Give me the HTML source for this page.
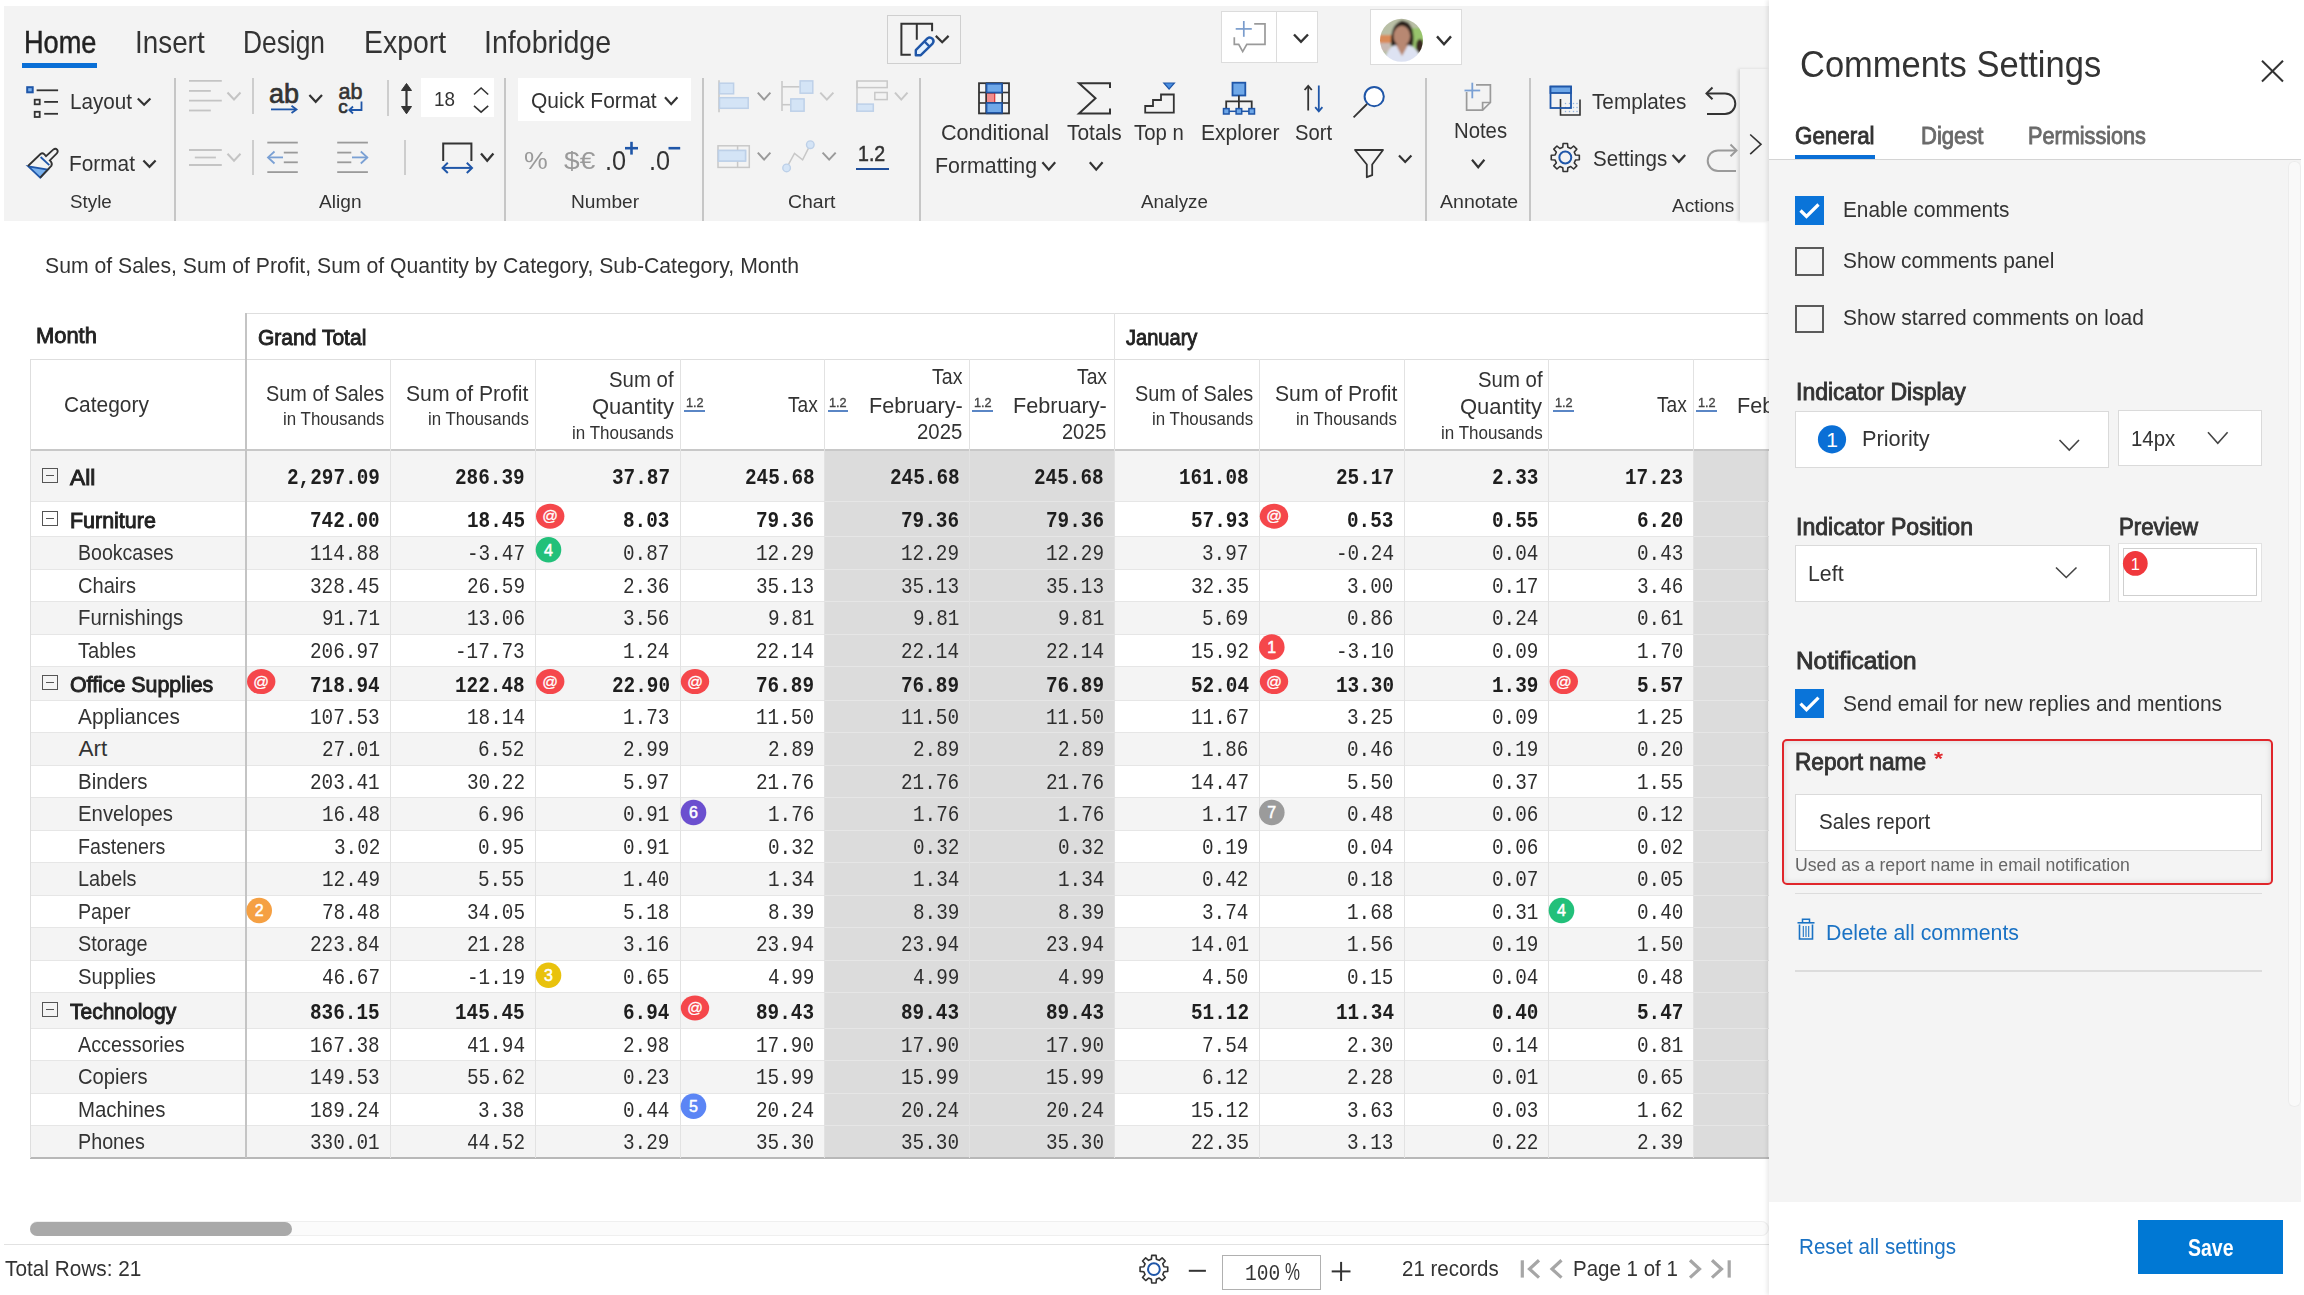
<!DOCTYPE html>
<html><head><meta charset="utf-8"><style>
html,body{margin:0;padding:0;}
body{width:2304px;height:1295px;position:relative;overflow:hidden;background:#fff;font-family:"Liberation Sans",sans-serif;}
.t{position:absolute;white-space:nowrap;transform-origin:0 0;}
.r{position:absolute;}
</style></head><body>
<div class="r" style="left:4.00px;top:5.50px;width:1764.50px;height:215.50px;background:#f3f3f3;"></div>
<div class="t" style="left:23.90px;top:27.12px;font-family:'Liberation Sans', sans-serif;font-size:30.52px;line-height:31px;font-weight:400;color:#222;transform:scaleX(0.8904);-webkit-text-stroke:0.45px #222;">Home</div>
<div class="t" style="left:134.70px;top:27.12px;font-family:'Liberation Sans', sans-serif;font-size:30.52px;line-height:31px;font-weight:400;color:#333;transform:scaleX(0.9121);">Insert</div>
<div class="t" style="left:243.00px;top:27.12px;font-family:'Liberation Sans', sans-serif;font-size:30.52px;line-height:31px;font-weight:400;color:#333;transform:scaleX(0.8631);">Design</div>
<div class="t" style="left:363.60px;top:27.12px;font-family:'Liberation Sans', sans-serif;font-size:30.52px;line-height:31px;font-weight:400;color:#333;transform:scaleX(0.9307);">Export</div>
<div class="t" style="left:484.30px;top:27.12px;font-family:'Liberation Sans', sans-serif;font-size:30.52px;line-height:31px;font-weight:400;color:#333;transform:scaleX(0.9363);">Infobridge</div>
<div class="r" style="left:22.00px;top:63.00px;width:75.00px;height:5.00px;background:#0a6fd6;"></div>
<div class="r" style="left:887.20px;top:15.40px;width:74.10px;height:48.70px;border:1px solid #cfcfcf;box-sizing:border-box;"></div>
<div class="r" style="left:1221.30px;top:10.60px;width:96.70px;height:52.40px;background:#fff;border:1px solid #dcdcdc;box-sizing:border-box;"></div>
<div class="r" style="left:1276.00px;top:10.60px;width:1.00px;height:52.40px;background:#dcdcdc;"></div>
<div class="r" style="left:1369.60px;top:8.50px;width:92.10px;height:56.60px;background:#fff;border:1px solid #dcdcdc;box-sizing:border-box;"></div>
<div class="r" style="left:173.50px;top:78.00px;width:2.00px;height:143.00px;background:#c6c6c6;"></div>
<div class="r" style="left:503.80px;top:78.00px;width:2.00px;height:143.00px;background:#c6c6c6;"></div>
<div class="r" style="left:701.60px;top:78.00px;width:2.00px;height:143.00px;background:#c6c6c6;"></div>
<div class="r" style="left:918.80px;top:78.00px;width:2.00px;height:143.00px;background:#c6c6c6;"></div>
<div class="r" style="left:1425.00px;top:78.00px;width:2.00px;height:143.00px;background:#c6c6c6;"></div>
<div class="r" style="left:1529.20px;top:78.00px;width:2.00px;height:143.00px;background:#c6c6c6;"></div>
<div class="r" style="left:251.80px;top:78.00px;width:2.00px;height:36.00px;background:#cdcdcd;"></div>
<div class="r" style="left:251.80px;top:139.50px;width:2.00px;height:35.90px;background:#cdcdcd;"></div>
<div class="r" style="left:386.80px;top:80.40px;width:2.00px;height:35.90px;background:#cdcdcd;"></div>
<div class="r" style="left:404.00px;top:139.50px;width:2.00px;height:35.90px;background:#cdcdcd;"></div>
<div class="r" style="left:421.20px;top:78.10px;width:72.60px;height:39.40px;background:#fff;"></div>
<div class="r" style="left:518.00px;top:78.10px;width:173.20px;height:42.90px;background:#fff;"></div>
<div class="t" style="left:70.20px;top:89.99px;font-family:'Liberation Sans', sans-serif;font-size:22.82px;line-height:23px;font-weight:400;color:#333;transform:scaleX(0.9049);">Layout</div>
<div class="t" style="left:68.50px;top:151.69px;font-family:'Liberation Sans', sans-serif;font-size:22.53px;line-height:23px;font-weight:400;color:#333;transform:scaleX(0.9249);">Format</div>
<div class="t" style="left:434.00px;top:88.09px;font-family:'Liberation Sans', sans-serif;font-size:21.08px;line-height:21px;font-weight:400;color:#333;transform:scaleX(0.8957);">18</div>
<div class="t" style="left:531.30px;top:89.64px;font-family:'Liberation Sans', sans-serif;font-size:21.80px;line-height:22px;font-weight:400;color:#333;transform:scaleX(0.9609);">Quick Format</div>
<div class="t" style="left:940.70px;top:121.84px;font-family:'Liberation Sans', sans-serif;font-size:22.09px;line-height:22px;font-weight:400;color:#333;transform:scaleX(0.9781);">Conditional</div>
<div class="t" style="left:934.60px;top:155.24px;font-family:'Liberation Sans', sans-serif;font-size:22.09px;line-height:22px;font-weight:400;color:#333;transform:scaleX(0.9668);">Formatting</div>
<div class="t" style="left:1067.00px;top:121.84px;font-family:'Liberation Sans', sans-serif;font-size:22.09px;line-height:22px;font-weight:400;color:#333;transform:scaleX(0.9477);">Totals</div>
<div class="t" style="left:1133.90px;top:121.84px;font-family:'Liberation Sans', sans-serif;font-size:22.09px;line-height:22px;font-weight:400;color:#333;transform:scaleX(0.9210);">Top n</div>
<div class="t" style="left:1200.70px;top:121.74px;font-family:'Liberation Sans', sans-serif;font-size:22.09px;line-height:22px;font-weight:400;color:#333;transform:scaleX(0.9545);">Explorer</div>
<div class="t" style="left:1294.80px;top:121.74px;font-family:'Liberation Sans', sans-serif;font-size:22.09px;line-height:22px;font-weight:400;color:#333;transform:scaleX(0.9151);">Sort</div>
<div class="t" style="left:1453.60px;top:119.94px;font-family:'Liberation Sans', sans-serif;font-size:22.09px;line-height:22px;font-weight:400;color:#333;transform:scaleX(0.9200);">Notes</div>
<div class="t" style="left:1591.90px;top:89.84px;font-family:'Liberation Sans', sans-serif;font-size:22.67px;line-height:23px;font-weight:400;color:#333;transform:scaleX(0.9145);">Templates</div>
<div class="t" style="left:1593.40px;top:146.94px;font-family:'Liberation Sans', sans-serif;font-size:22.67px;line-height:23px;font-weight:400;color:#333;transform:scaleX(0.9071);">Settings</div>
<div class="t" style="left:70.20px;top:191.85px;font-family:'Liberation Sans', sans-serif;font-size:18.90px;line-height:19px;font-weight:400;color:#333;transform:scaleX(0.9954);">Style</div>
<div class="t" style="left:319.30px;top:192.35px;font-family:'Liberation Sans', sans-serif;font-size:18.90px;line-height:19px;font-weight:400;color:#333;transform:scaleX(1.0120);">Align</div>
<div class="t" style="left:570.90px;top:192.05px;font-family:'Liberation Sans', sans-serif;font-size:18.90px;line-height:19px;font-weight:400;color:#333;transform:scaleX(1.0131);">Number</div>
<div class="t" style="left:787.70px;top:191.95px;font-family:'Liberation Sans', sans-serif;font-size:18.90px;line-height:19px;font-weight:400;color:#333;transform:scaleX(1.0282);">Chart</div>
<div class="t" style="left:1140.60px;top:191.95px;font-family:'Liberation Sans', sans-serif;font-size:18.90px;line-height:19px;font-weight:400;color:#333;transform:scaleX(0.9952);">Analyze</div>
<div class="t" style="left:1439.50px;top:191.65px;font-family:'Liberation Sans', sans-serif;font-size:18.90px;line-height:19px;font-weight:400;color:#333;transform:scaleX(1.0340);">Annotate</div>
<div class="t" style="left:1671.60px;top:195.55px;font-family:'Liberation Sans', sans-serif;font-size:18.90px;line-height:19px;font-weight:400;color:#333;transform:scaleX(1.0068);">Actions</div>
<div class="t" style="left:858.10px;top:143.44px;font-family:'Liberation Sans', sans-serif;font-size:21.80px;line-height:22px;font-weight:400;color:#333;transform:scaleX(0.8975);-webkit-text-stroke:0.5px #333;">1.2</div>
<div class="r" style="left:855.80px;top:167.50px;width:32.80px;height:2.30px;background:#1f4e9a;"></div>
<div class="t" style="left:523.70px;top:148.69px;font-family:'Liberation Sans', sans-serif;font-size:23.98px;line-height:24px;font-weight:400;color:#9a9a9a;transform:scaleX(1.1150);">%</div>
<div class="t" style="left:563.50px;top:148.69px;font-family:'Liberation Sans', sans-serif;font-size:23.98px;line-height:24px;font-weight:400;color:#9a9a9a;transform:scaleX(1.1731);">$€</div>
<div class="t" style="left:605.40px;top:146.93px;font-family:'Liberation Sans', sans-serif;font-size:27.62px;line-height:28px;font-weight:400;color:#333;transform:scaleX(0.9150);">.0</div>
<div class="t" style="left:648.90px;top:146.93px;font-family:'Liberation Sans', sans-serif;font-size:27.62px;line-height:28px;font-weight:400;color:#333;transform:scaleX(0.9150);">.0</div>
<div class="r" style="left:1739.50px;top:69.40px;width:29.00px;height:151.60px;background:#f3f3f3;box-shadow:-2px 0 3px rgba(0,0,0,0.12);"></div>
<div class="t" style="left:44.60px;top:255.34px;font-family:'Liberation Sans', sans-serif;font-size:22.09px;line-height:22px;font-weight:400;color:#333;transform:scaleX(0.9596);">Sum of Sales, Sum of Profit, Sum of Quantity by Category, Sub-Category, Month</div>
<div class="r" style="left:30.00px;top:450.50px;width:1738.50px;height:51.00px;background:#f4f4f4;"></div>
<div class="r" style="left:30.00px;top:501.50px;width:1738.50px;height:35.00px;background:#ffffff;"></div>
<div class="r" style="left:30.00px;top:536.50px;width:1738.50px;height:32.50px;background:#f4f4f4;"></div>
<div class="r" style="left:30.00px;top:569.00px;width:1738.50px;height:32.50px;background:#ffffff;"></div>
<div class="r" style="left:30.00px;top:601.50px;width:1738.50px;height:32.50px;background:#f4f4f4;"></div>
<div class="r" style="left:30.00px;top:634.00px;width:1738.50px;height:32.50px;background:#ffffff;"></div>
<div class="r" style="left:30.00px;top:666.50px;width:1738.50px;height:33.50px;background:#f4f4f4;"></div>
<div class="r" style="left:30.00px;top:700.00px;width:1738.50px;height:32.50px;background:#ffffff;"></div>
<div class="r" style="left:30.00px;top:732.50px;width:1738.50px;height:32.50px;background:#f4f4f4;"></div>
<div class="r" style="left:30.00px;top:765.00px;width:1738.50px;height:32.50px;background:#ffffff;"></div>
<div class="r" style="left:30.00px;top:797.50px;width:1738.50px;height:32.50px;background:#f4f4f4;"></div>
<div class="r" style="left:30.00px;top:830.00px;width:1738.50px;height:32.50px;background:#ffffff;"></div>
<div class="r" style="left:30.00px;top:862.50px;width:1738.50px;height:32.50px;background:#f4f4f4;"></div>
<div class="r" style="left:30.00px;top:895.00px;width:1738.50px;height:32.50px;background:#ffffff;"></div>
<div class="r" style="left:30.00px;top:927.50px;width:1738.50px;height:32.50px;background:#f4f4f4;"></div>
<div class="r" style="left:30.00px;top:960.00px;width:1738.50px;height:32.50px;background:#ffffff;"></div>
<div class="r" style="left:30.00px;top:992.50px;width:1738.50px;height:35.50px;background:#f4f4f4;"></div>
<div class="r" style="left:30.00px;top:1028.00px;width:1738.50px;height:32.50px;background:#ffffff;"></div>
<div class="r" style="left:30.00px;top:1060.50px;width:1738.50px;height:32.50px;background:#f4f4f4;"></div>
<div class="r" style="left:30.00px;top:1093.00px;width:1738.50px;height:32.50px;background:#ffffff;"></div>
<div class="r" style="left:30.00px;top:1125.50px;width:1738.50px;height:32.50px;background:#f4f4f4;"></div>
<div class="r" style="left:824.80px;top:450.50px;width:289.60px;height:707.50px;background:#dcdcdc;"></div>
<div class="r" style="left:1693.60px;top:450.50px;width:74.90px;height:707.50px;background:#dcdcdc;"></div>
<div class="r" style="left:30.00px;top:501.00px;width:1738.50px;height:1.00px;background:#e6e6e6;"></div>
<div class="r" style="left:30.00px;top:536.00px;width:1738.50px;height:1.00px;background:#e6e6e6;"></div>
<div class="r" style="left:30.00px;top:568.50px;width:1738.50px;height:1.00px;background:#e6e6e6;"></div>
<div class="r" style="left:30.00px;top:601.00px;width:1738.50px;height:1.00px;background:#e6e6e6;"></div>
<div class="r" style="left:30.00px;top:633.50px;width:1738.50px;height:1.00px;background:#e6e6e6;"></div>
<div class="r" style="left:30.00px;top:666.00px;width:1738.50px;height:1.00px;background:#e6e6e6;"></div>
<div class="r" style="left:30.00px;top:699.50px;width:1738.50px;height:1.00px;background:#e6e6e6;"></div>
<div class="r" style="left:30.00px;top:732.00px;width:1738.50px;height:1.00px;background:#e6e6e6;"></div>
<div class="r" style="left:30.00px;top:764.50px;width:1738.50px;height:1.00px;background:#e6e6e6;"></div>
<div class="r" style="left:30.00px;top:797.00px;width:1738.50px;height:1.00px;background:#e6e6e6;"></div>
<div class="r" style="left:30.00px;top:829.50px;width:1738.50px;height:1.00px;background:#e6e6e6;"></div>
<div class="r" style="left:30.00px;top:862.00px;width:1738.50px;height:1.00px;background:#e6e6e6;"></div>
<div class="r" style="left:30.00px;top:894.50px;width:1738.50px;height:1.00px;background:#e6e6e6;"></div>
<div class="r" style="left:30.00px;top:927.00px;width:1738.50px;height:1.00px;background:#e6e6e6;"></div>
<div class="r" style="left:30.00px;top:959.50px;width:1738.50px;height:1.00px;background:#e6e6e6;"></div>
<div class="r" style="left:30.00px;top:992.00px;width:1738.50px;height:1.00px;background:#e6e6e6;"></div>
<div class="r" style="left:30.00px;top:1027.50px;width:1738.50px;height:1.00px;background:#e6e6e6;"></div>
<div class="r" style="left:30.00px;top:1060.00px;width:1738.50px;height:1.00px;background:#e6e6e6;"></div>
<div class="r" style="left:30.00px;top:1092.50px;width:1738.50px;height:1.00px;background:#e6e6e6;"></div>
<div class="r" style="left:30.00px;top:1125.00px;width:1738.50px;height:1.00px;background:#e6e6e6;"></div>
<div class="r" style="left:245.60px;top:313.00px;width:1522.90px;height:1.20px;background:#dedede;"></div>
<div class="r" style="left:30.00px;top:359.10px;width:1738.50px;height:1.20px;background:#dedede;"></div>
<div class="r" style="left:30.00px;top:448.60px;width:1738.50px;height:2.00px;background:#c8c8c8;"></div>
<div class="r" style="left:30.00px;top:1156.80px;width:1738.50px;height:1.80px;background:#b8b8b8;"></div>
<div class="r" style="left:29.50px;top:359.10px;width:1.20px;height:798.90px;background:#dedede;"></div>
<div class="r" style="left:389.90px;top:359.10px;width:1.00px;height:798.90px;background:#e2e2e2;"></div>
<div class="r" style="left:534.70px;top:359.10px;width:1.00px;height:798.90px;background:#e2e2e2;"></div>
<div class="r" style="left:679.50px;top:359.10px;width:1.00px;height:798.90px;background:#e2e2e2;"></div>
<div class="r" style="left:824.30px;top:359.10px;width:1.00px;height:798.90px;background:#e2e2e2;"></div>
<div class="r" style="left:969.10px;top:359.10px;width:1.00px;height:798.90px;background:#e2e2e2;"></div>
<div class="r" style="left:1113.90px;top:313.00px;width:1.00px;height:845.00px;background:#e2e2e2;"></div>
<div class="r" style="left:1258.70px;top:359.10px;width:1.00px;height:798.90px;background:#e2e2e2;"></div>
<div class="r" style="left:1403.50px;top:359.10px;width:1.00px;height:798.90px;background:#e2e2e2;"></div>
<div class="r" style="left:1548.30px;top:359.10px;width:1.00px;height:798.90px;background:#e2e2e2;"></div>
<div class="r" style="left:1693.10px;top:359.10px;width:1.00px;height:798.90px;background:#e2e2e2;"></div>
<div class="r" style="left:244.60px;top:313.00px;width:2.00px;height:845.00px;background:#c4c4c4;"></div>
<div class="t" style="left:35.90px;top:324.19px;font-family:'Liberation Sans', sans-serif;font-size:22.53px;line-height:23px;font-weight:400;color:#222;transform:scaleX(0.9724);-webkit-text-stroke:0.9px #222;">Month</div>
<div class="t" style="left:257.90px;top:326.29px;font-family:'Liberation Sans', sans-serif;font-size:22.53px;line-height:23px;font-weight:400;color:#222;transform:scaleX(0.9338);-webkit-text-stroke:0.9px #222;">Grand Total</div>
<div class="t" style="left:1126.00px;top:325.59px;font-family:'Liberation Sans', sans-serif;font-size:22.53px;line-height:23px;font-weight:400;color:#222;transform:scaleX(0.8909);-webkit-text-stroke:0.9px #222;">January</div>
<div class="t" style="left:63.70px;top:393.64px;font-family:'Liberation Sans', sans-serif;font-size:22.09px;line-height:22px;font-weight:400;color:#333;transform:scaleX(0.9482);">Category</div>
<div class="t" style="left:266.00px;top:383.44px;font-family:'Liberation Sans', sans-serif;font-size:21.80px;line-height:22px;font-weight:400;color:#333;transform:scaleX(0.9123);">Sum of Sales</div>
<div class="t" style="left:283.00px;top:410.35px;font-family:'Liberation Sans', sans-serif;font-size:18.31px;line-height:18px;font-weight:400;color:#333;transform:scaleX(0.9242);">in Thousands</div>
<div class="t" style="left:406.00px;top:383.44px;font-family:'Liberation Sans', sans-serif;font-size:21.80px;line-height:22px;font-weight:400;color:#333;transform:scaleX(0.9713);">Sum of Profit</div>
<div class="t" style="left:427.50px;top:410.35px;font-family:'Liberation Sans', sans-serif;font-size:18.31px;line-height:18px;font-weight:400;color:#333;transform:scaleX(0.9205);">in Thousands</div>
<div class="t" style="left:608.90px;top:369.14px;font-family:'Liberation Sans', sans-serif;font-size:21.80px;line-height:22px;font-weight:400;color:#333;transform:scaleX(0.9347);">Sum of</div>
<div class="t" style="left:591.50px;top:395.64px;font-family:'Liberation Sans', sans-serif;font-size:21.80px;line-height:22px;font-weight:400;color:#333;transform:scaleX(1.0097);">Quantity</div>
<div class="t" style="left:571.70px;top:424.45px;font-family:'Liberation Sans', sans-serif;font-size:18.31px;line-height:18px;font-weight:400;color:#333;transform:scaleX(0.9288);">in Thousands</div>
<div class="t" style="left:787.70px;top:394.44px;font-family:'Liberation Sans', sans-serif;font-size:21.80px;line-height:22px;font-weight:400;color:#333;transform:scaleX(0.8790);">Tax</div>
<div class="t" style="left:685.80px;top:396.27px;font-family:'Liberation Sans', sans-serif;font-size:12.79px;line-height:13px;font-weight:400;color:#444;transform:scaleX(0.9899);-webkit-text-stroke:0.35px #444;">1.2</div>
<div class="r" style="left:684.20px;top:410.40px;width:20.60px;height:1.40px;background:#5a86c5;"></div>
<div class="t" style="left:829.20px;top:396.27px;font-family:'Liberation Sans', sans-serif;font-size:12.79px;line-height:13px;font-weight:400;color:#444;transform:scaleX(0.9899);-webkit-text-stroke:0.35px #444;">1.2</div>
<div class="r" style="left:827.60px;top:410.40px;width:20.60px;height:1.40px;background:#5a86c5;"></div>
<div class="t" style="left:974.00px;top:396.27px;font-family:'Liberation Sans', sans-serif;font-size:12.79px;line-height:13px;font-weight:400;color:#444;transform:scaleX(0.9899);-webkit-text-stroke:0.35px #444;">1.2</div>
<div class="r" style="left:972.40px;top:410.40px;width:20.60px;height:1.40px;background:#5a86c5;"></div>
<div class="t" style="left:931.90px;top:366.14px;font-family:'Liberation Sans', sans-serif;font-size:21.80px;line-height:22px;font-weight:400;color:#333;transform:scaleX(0.8967);">Tax</div>
<div class="t" style="left:868.60px;top:394.94px;font-family:'Liberation Sans', sans-serif;font-size:21.80px;line-height:22px;font-weight:400;color:#333;transform:scaleX(0.9914);">February-</div>
<div class="t" style="left:917.00px;top:421.44px;font-family:'Liberation Sans', sans-serif;font-size:21.80px;line-height:22px;font-weight:400;color:#333;transform:scaleX(0.9338);">2025</div>
<div class="t" style="left:1077.00px;top:366.14px;font-family:'Liberation Sans', sans-serif;font-size:21.80px;line-height:22px;font-weight:400;color:#333;transform:scaleX(0.8849);">Tax</div>
<div class="t" style="left:1012.70px;top:394.94px;font-family:'Liberation Sans', sans-serif;font-size:21.80px;line-height:22px;font-weight:400;color:#333;transform:scaleX(0.9925);">February-</div>
<div class="t" style="left:1062.00px;top:421.44px;font-family:'Liberation Sans', sans-serif;font-size:21.80px;line-height:22px;font-weight:400;color:#333;transform:scaleX(0.9173);">2025</div>
<div class="t" style="left:1134.80px;top:383.44px;font-family:'Liberation Sans', sans-serif;font-size:21.80px;line-height:22px;font-weight:400;color:#333;transform:scaleX(0.9123);">Sum of Sales</div>
<div class="t" style="left:1151.80px;top:410.35px;font-family:'Liberation Sans', sans-serif;font-size:18.31px;line-height:18px;font-weight:400;color:#333;transform:scaleX(0.9242);">in Thousands</div>
<div class="t" style="left:1274.80px;top:383.44px;font-family:'Liberation Sans', sans-serif;font-size:21.80px;line-height:22px;font-weight:400;color:#333;transform:scaleX(0.9713);">Sum of Profit</div>
<div class="t" style="left:1296.30px;top:410.35px;font-family:'Liberation Sans', sans-serif;font-size:18.31px;line-height:18px;font-weight:400;color:#333;transform:scaleX(0.9205);">in Thousands</div>
<div class="t" style="left:1477.70px;top:369.14px;font-family:'Liberation Sans', sans-serif;font-size:21.80px;line-height:22px;font-weight:400;color:#333;transform:scaleX(0.9347);">Sum of</div>
<div class="t" style="left:1460.30px;top:395.64px;font-family:'Liberation Sans', sans-serif;font-size:21.80px;line-height:22px;font-weight:400;color:#333;transform:scaleX(1.0097);">Quantity</div>
<div class="t" style="left:1440.50px;top:424.45px;font-family:'Liberation Sans', sans-serif;font-size:18.31px;line-height:18px;font-weight:400;color:#333;transform:scaleX(0.9288);">in Thousands</div>
<div class="t" style="left:1656.50px;top:394.44px;font-family:'Liberation Sans', sans-serif;font-size:21.80px;line-height:22px;font-weight:400;color:#333;transform:scaleX(0.8790);">Tax</div>
<div class="t" style="left:1554.60px;top:396.27px;font-family:'Liberation Sans', sans-serif;font-size:12.79px;line-height:13px;font-weight:400;color:#444;transform:scaleX(0.9899);-webkit-text-stroke:0.35px #444;">1.2</div>
<div class="r" style="left:1553.00px;top:410.40px;width:20.60px;height:1.40px;background:#5a86c5;"></div>
<div class="t" style="left:1698.00px;top:396.27px;font-family:'Liberation Sans', sans-serif;font-size:12.79px;line-height:13px;font-weight:400;color:#444;transform:scaleX(0.9899);-webkit-text-stroke:0.35px #444;">1.2</div>
<div class="r" style="left:1696.40px;top:410.40px;width:20.60px;height:1.40px;background:#5a86c5;"></div>
<div class="t" style="left:1842.80px;top:396.27px;font-family:'Liberation Sans', sans-serif;font-size:12.79px;line-height:13px;font-weight:400;color:#444;transform:scaleX(0.9899);-webkit-text-stroke:0.35px #444;">1.2</div>
<div class="r" style="left:1841.20px;top:410.40px;width:20.60px;height:1.40px;background:#5a86c5;"></div>
<div class="t" style="left:1800.70px;top:366.14px;font-family:'Liberation Sans', sans-serif;font-size:21.80px;line-height:22px;font-weight:400;color:#333;transform:scaleX(0.8967);">Tax</div>
<div class="t" style="left:1737.40px;top:394.94px;font-family:'Liberation Sans', sans-serif;font-size:21.80px;line-height:22px;font-weight:400;color:#333;transform:scaleX(0.9914);">February-</div>
<div class="t" style="left:1785.80px;top:421.44px;font-family:'Liberation Sans', sans-serif;font-size:21.80px;line-height:22px;font-weight:400;color:#333;transform:scaleX(0.9338);">2025</div>
<div class="t" style="left:1945.80px;top:366.14px;font-family:'Liberation Sans', sans-serif;font-size:21.80px;line-height:22px;font-weight:400;color:#333;transform:scaleX(0.8849);">Tax</div>
<div class="t" style="left:1881.50px;top:394.94px;font-family:'Liberation Sans', sans-serif;font-size:21.80px;line-height:22px;font-weight:400;color:#333;transform:scaleX(0.9925);">February-</div>
<div class="t" style="left:1930.80px;top:421.44px;font-family:'Liberation Sans', sans-serif;font-size:21.80px;line-height:22px;font-weight:400;color:#333;transform:scaleX(0.9173);">2025</div>
<div class="t" style="left:69.70px;top:465.69px;font-family:'Liberation Sans', sans-serif;font-size:22.53px;line-height:23px;font-weight:400;color:#222;transform:scaleX(1.0094);-webkit-text-stroke:0.95px #222;">All</div>
<div class="r" style="left:42.40px;top:467.50px;width:15.40px;height:15.50px;border:1.6px solid #555;box-sizing:border-box;"></div>
<div class="r" style="left:45.80px;top:474.60px;width:8.60px;height:1.40px;background:#555;"></div>
<div class="t" style="left:287.19px;top:467.44px;font-family:'Liberation Mono', monospace;font-size:22.77px;line-height:23px;font-weight:700;color:#1e1e1e;transform:scaleX(0.8500);">2,297.09</div>
<div class="t" style="left:455.22px;top:467.44px;font-family:'Liberation Mono', monospace;font-size:22.77px;line-height:23px;font-weight:700;color:#1e1e1e;transform:scaleX(0.8500);">286.39</div>
<div class="t" style="left:611.63px;top:467.44px;font-family:'Liberation Mono', monospace;font-size:22.77px;line-height:23px;font-weight:700;color:#1e1e1e;transform:scaleX(0.8500);">37.87</div>
<div class="t" style="left:744.82px;top:467.44px;font-family:'Liberation Mono', monospace;font-size:22.77px;line-height:23px;font-weight:700;color:#1e1e1e;transform:scaleX(0.8500);">245.68</div>
<div class="t" style="left:889.62px;top:467.44px;font-family:'Liberation Mono', monospace;font-size:22.77px;line-height:23px;font-weight:700;color:#1e1e1e;transform:scaleX(0.8500);">245.68</div>
<div class="t" style="left:1034.42px;top:467.44px;font-family:'Liberation Mono', monospace;font-size:22.77px;line-height:23px;font-weight:700;color:#1e1e1e;transform:scaleX(0.8500);">245.68</div>
<div class="t" style="left:1179.22px;top:467.44px;font-family:'Liberation Mono', monospace;font-size:22.77px;line-height:23px;font-weight:700;color:#1e1e1e;transform:scaleX(0.8500);">161.08</div>
<div class="t" style="left:1335.63px;top:467.44px;font-family:'Liberation Mono', monospace;font-size:22.77px;line-height:23px;font-weight:700;color:#1e1e1e;transform:scaleX(0.8500);">25.17</div>
<div class="t" style="left:1492.04px;top:467.44px;font-family:'Liberation Mono', monospace;font-size:22.77px;line-height:23px;font-weight:700;color:#1e1e1e;transform:scaleX(0.8500);">2.33</div>
<div class="t" style="left:1625.23px;top:467.44px;font-family:'Liberation Mono', monospace;font-size:22.77px;line-height:23px;font-weight:700;color:#1e1e1e;transform:scaleX(0.8500);">17.23</div>
<div class="t" style="left:69.70px;top:508.69px;font-family:'Liberation Sans', sans-serif;font-size:22.53px;line-height:23px;font-weight:400;color:#222;transform:scaleX(0.9526);-webkit-text-stroke:0.95px #222;">Furniture</div>
<div class="r" style="left:42.40px;top:510.50px;width:15.40px;height:15.50px;border:1.6px solid #555;box-sizing:border-box;"></div>
<div class="r" style="left:45.80px;top:517.60px;width:8.60px;height:1.40px;background:#555;"></div>
<div class="t" style="left:310.42px;top:510.44px;font-family:'Liberation Mono', monospace;font-size:22.77px;line-height:23px;font-weight:700;color:#1e1e1e;transform:scaleX(0.8500);">742.00</div>
<div class="t" style="left:466.83px;top:510.44px;font-family:'Liberation Mono', monospace;font-size:22.77px;line-height:23px;font-weight:700;color:#1e1e1e;transform:scaleX(0.8500);">18.45</div>
<div class="t" style="left:623.24px;top:510.44px;font-family:'Liberation Mono', monospace;font-size:22.77px;line-height:23px;font-weight:700;color:#1e1e1e;transform:scaleX(0.8500);">8.03</div>
<div class="t" style="left:756.43px;top:510.44px;font-family:'Liberation Mono', monospace;font-size:22.77px;line-height:23px;font-weight:700;color:#1e1e1e;transform:scaleX(0.8500);">79.36</div>
<div class="t" style="left:901.23px;top:510.44px;font-family:'Liberation Mono', monospace;font-size:22.77px;line-height:23px;font-weight:700;color:#1e1e1e;transform:scaleX(0.8500);">79.36</div>
<div class="t" style="left:1046.03px;top:510.44px;font-family:'Liberation Mono', monospace;font-size:22.77px;line-height:23px;font-weight:700;color:#1e1e1e;transform:scaleX(0.8500);">79.36</div>
<div class="t" style="left:1190.83px;top:510.44px;font-family:'Liberation Mono', monospace;font-size:22.77px;line-height:23px;font-weight:700;color:#1e1e1e;transform:scaleX(0.8500);">57.93</div>
<div class="t" style="left:1347.24px;top:510.44px;font-family:'Liberation Mono', monospace;font-size:22.77px;line-height:23px;font-weight:700;color:#1e1e1e;transform:scaleX(0.8500);">0.53</div>
<div class="t" style="left:1492.04px;top:510.44px;font-family:'Liberation Mono', monospace;font-size:22.77px;line-height:23px;font-weight:700;color:#1e1e1e;transform:scaleX(0.8500);">0.55</div>
<div class="t" style="left:1636.84px;top:510.44px;font-family:'Liberation Mono', monospace;font-size:22.77px;line-height:23px;font-weight:700;color:#1e1e1e;transform:scaleX(0.8500);">6.20</div>
<div class="t" style="left:78.40px;top:541.34px;font-family:'Liberation Sans', sans-serif;font-size:22.53px;line-height:23px;font-weight:400;color:#333;transform:scaleX(0.8673);">Bookcases</div>
<div class="t" style="left:310.42px;top:543.09px;font-family:'Liberation Mono', monospace;font-size:22.77px;line-height:23px;font-weight:400;color:#2e2e2e;transform:scaleX(0.8500);">114.88</div>
<div class="t" style="left:466.83px;top:543.09px;font-family:'Liberation Mono', monospace;font-size:22.77px;line-height:23px;font-weight:400;color:#2e2e2e;transform:scaleX(0.8500);">-3.47</div>
<div class="t" style="left:623.24px;top:543.09px;font-family:'Liberation Mono', monospace;font-size:22.77px;line-height:23px;font-weight:400;color:#2e2e2e;transform:scaleX(0.8500);">0.87</div>
<div class="t" style="left:756.43px;top:543.09px;font-family:'Liberation Mono', monospace;font-size:22.77px;line-height:23px;font-weight:400;color:#2e2e2e;transform:scaleX(0.8500);">12.29</div>
<div class="t" style="left:901.23px;top:543.09px;font-family:'Liberation Mono', monospace;font-size:22.77px;line-height:23px;font-weight:400;color:#2e2e2e;transform:scaleX(0.8500);">12.29</div>
<div class="t" style="left:1046.03px;top:543.09px;font-family:'Liberation Mono', monospace;font-size:22.77px;line-height:23px;font-weight:400;color:#2e2e2e;transform:scaleX(0.8500);">12.29</div>
<div class="t" style="left:1202.44px;top:543.09px;font-family:'Liberation Mono', monospace;font-size:22.77px;line-height:23px;font-weight:400;color:#2e2e2e;transform:scaleX(0.8500);">3.97</div>
<div class="t" style="left:1335.63px;top:543.09px;font-family:'Liberation Mono', monospace;font-size:22.77px;line-height:23px;font-weight:400;color:#2e2e2e;transform:scaleX(0.8500);">-0.24</div>
<div class="t" style="left:1492.04px;top:543.09px;font-family:'Liberation Mono', monospace;font-size:22.77px;line-height:23px;font-weight:400;color:#2e2e2e;transform:scaleX(0.8500);">0.04</div>
<div class="t" style="left:1636.84px;top:543.09px;font-family:'Liberation Mono', monospace;font-size:22.77px;line-height:23px;font-weight:400;color:#2e2e2e;transform:scaleX(0.8500);">0.43</div>
<div class="t" style="left:78.40px;top:573.84px;font-family:'Liberation Sans', sans-serif;font-size:22.53px;line-height:23px;font-weight:400;color:#333;transform:scaleX(0.8923);">Chairs</div>
<div class="t" style="left:310.42px;top:575.59px;font-family:'Liberation Mono', monospace;font-size:22.77px;line-height:23px;font-weight:400;color:#2e2e2e;transform:scaleX(0.8500);">328.45</div>
<div class="t" style="left:466.83px;top:575.59px;font-family:'Liberation Mono', monospace;font-size:22.77px;line-height:23px;font-weight:400;color:#2e2e2e;transform:scaleX(0.8500);">26.59</div>
<div class="t" style="left:623.24px;top:575.59px;font-family:'Liberation Mono', monospace;font-size:22.77px;line-height:23px;font-weight:400;color:#2e2e2e;transform:scaleX(0.8500);">2.36</div>
<div class="t" style="left:756.43px;top:575.59px;font-family:'Liberation Mono', monospace;font-size:22.77px;line-height:23px;font-weight:400;color:#2e2e2e;transform:scaleX(0.8500);">35.13</div>
<div class="t" style="left:901.23px;top:575.59px;font-family:'Liberation Mono', monospace;font-size:22.77px;line-height:23px;font-weight:400;color:#2e2e2e;transform:scaleX(0.8500);">35.13</div>
<div class="t" style="left:1046.03px;top:575.59px;font-family:'Liberation Mono', monospace;font-size:22.77px;line-height:23px;font-weight:400;color:#2e2e2e;transform:scaleX(0.8500);">35.13</div>
<div class="t" style="left:1190.83px;top:575.59px;font-family:'Liberation Mono', monospace;font-size:22.77px;line-height:23px;font-weight:400;color:#2e2e2e;transform:scaleX(0.8500);">32.35</div>
<div class="t" style="left:1347.24px;top:575.59px;font-family:'Liberation Mono', monospace;font-size:22.77px;line-height:23px;font-weight:400;color:#2e2e2e;transform:scaleX(0.8500);">3.00</div>
<div class="t" style="left:1492.04px;top:575.59px;font-family:'Liberation Mono', monospace;font-size:22.77px;line-height:23px;font-weight:400;color:#2e2e2e;transform:scaleX(0.8500);">0.17</div>
<div class="t" style="left:1636.84px;top:575.59px;font-family:'Liberation Mono', monospace;font-size:22.77px;line-height:23px;font-weight:400;color:#2e2e2e;transform:scaleX(0.8500);">3.46</div>
<div class="t" style="left:78.40px;top:606.34px;font-family:'Liberation Sans', sans-serif;font-size:22.53px;line-height:23px;font-weight:400;color:#333;transform:scaleX(0.9041);">Furnishings</div>
<div class="t" style="left:322.03px;top:608.09px;font-family:'Liberation Mono', monospace;font-size:22.77px;line-height:23px;font-weight:400;color:#2e2e2e;transform:scaleX(0.8500);">91.71</div>
<div class="t" style="left:466.83px;top:608.09px;font-family:'Liberation Mono', monospace;font-size:22.77px;line-height:23px;font-weight:400;color:#2e2e2e;transform:scaleX(0.8500);">13.06</div>
<div class="t" style="left:623.24px;top:608.09px;font-family:'Liberation Mono', monospace;font-size:22.77px;line-height:23px;font-weight:400;color:#2e2e2e;transform:scaleX(0.8500);">3.56</div>
<div class="t" style="left:768.04px;top:608.09px;font-family:'Liberation Mono', monospace;font-size:22.77px;line-height:23px;font-weight:400;color:#2e2e2e;transform:scaleX(0.8500);">9.81</div>
<div class="t" style="left:912.84px;top:608.09px;font-family:'Liberation Mono', monospace;font-size:22.77px;line-height:23px;font-weight:400;color:#2e2e2e;transform:scaleX(0.8500);">9.81</div>
<div class="t" style="left:1057.64px;top:608.09px;font-family:'Liberation Mono', monospace;font-size:22.77px;line-height:23px;font-weight:400;color:#2e2e2e;transform:scaleX(0.8500);">9.81</div>
<div class="t" style="left:1202.44px;top:608.09px;font-family:'Liberation Mono', monospace;font-size:22.77px;line-height:23px;font-weight:400;color:#2e2e2e;transform:scaleX(0.8500);">5.69</div>
<div class="t" style="left:1347.24px;top:608.09px;font-family:'Liberation Mono', monospace;font-size:22.77px;line-height:23px;font-weight:400;color:#2e2e2e;transform:scaleX(0.8500);">0.86</div>
<div class="t" style="left:1492.04px;top:608.09px;font-family:'Liberation Mono', monospace;font-size:22.77px;line-height:23px;font-weight:400;color:#2e2e2e;transform:scaleX(0.8500);">0.24</div>
<div class="t" style="left:1636.84px;top:608.09px;font-family:'Liberation Mono', monospace;font-size:22.77px;line-height:23px;font-weight:400;color:#2e2e2e;transform:scaleX(0.8500);">0.61</div>
<div class="t" style="left:78.40px;top:638.84px;font-family:'Liberation Sans', sans-serif;font-size:22.53px;line-height:23px;font-weight:400;color:#333;transform:scaleX(0.8923);">Tables</div>
<div class="t" style="left:310.42px;top:640.59px;font-family:'Liberation Mono', monospace;font-size:22.77px;line-height:23px;font-weight:400;color:#2e2e2e;transform:scaleX(0.8500);">206.97</div>
<div class="t" style="left:455.22px;top:640.59px;font-family:'Liberation Mono', monospace;font-size:22.77px;line-height:23px;font-weight:400;color:#2e2e2e;transform:scaleX(0.8500);">-17.73</div>
<div class="t" style="left:623.24px;top:640.59px;font-family:'Liberation Mono', monospace;font-size:22.77px;line-height:23px;font-weight:400;color:#2e2e2e;transform:scaleX(0.8500);">1.24</div>
<div class="t" style="left:756.43px;top:640.59px;font-family:'Liberation Mono', monospace;font-size:22.77px;line-height:23px;font-weight:400;color:#2e2e2e;transform:scaleX(0.8500);">22.14</div>
<div class="t" style="left:901.23px;top:640.59px;font-family:'Liberation Mono', monospace;font-size:22.77px;line-height:23px;font-weight:400;color:#2e2e2e;transform:scaleX(0.8500);">22.14</div>
<div class="t" style="left:1046.03px;top:640.59px;font-family:'Liberation Mono', monospace;font-size:22.77px;line-height:23px;font-weight:400;color:#2e2e2e;transform:scaleX(0.8500);">22.14</div>
<div class="t" style="left:1190.83px;top:640.59px;font-family:'Liberation Mono', monospace;font-size:22.77px;line-height:23px;font-weight:400;color:#2e2e2e;transform:scaleX(0.8500);">15.92</div>
<div class="t" style="left:1335.63px;top:640.59px;font-family:'Liberation Mono', monospace;font-size:22.77px;line-height:23px;font-weight:400;color:#2e2e2e;transform:scaleX(0.8500);">-3.10</div>
<div class="t" style="left:1492.04px;top:640.59px;font-family:'Liberation Mono', monospace;font-size:22.77px;line-height:23px;font-weight:400;color:#2e2e2e;transform:scaleX(0.8500);">0.09</div>
<div class="t" style="left:1636.84px;top:640.59px;font-family:'Liberation Mono', monospace;font-size:22.77px;line-height:23px;font-weight:400;color:#2e2e2e;transform:scaleX(0.8500);">1.70</div>
<div class="t" style="left:69.70px;top:672.94px;font-family:'Liberation Sans', sans-serif;font-size:22.53px;line-height:23px;font-weight:400;color:#222;transform:scaleX(0.9483);-webkit-text-stroke:0.95px #222;">Office Supplies</div>
<div class="r" style="left:42.40px;top:674.75px;width:15.40px;height:15.50px;border:1.6px solid #555;box-sizing:border-box;"></div>
<div class="r" style="left:45.80px;top:681.85px;width:8.60px;height:1.40px;background:#555;"></div>
<div class="t" style="left:310.42px;top:674.69px;font-family:'Liberation Mono', monospace;font-size:22.77px;line-height:23px;font-weight:700;color:#1e1e1e;transform:scaleX(0.8500);">718.94</div>
<div class="t" style="left:455.22px;top:674.69px;font-family:'Liberation Mono', monospace;font-size:22.77px;line-height:23px;font-weight:700;color:#1e1e1e;transform:scaleX(0.8500);">122.48</div>
<div class="t" style="left:611.63px;top:674.69px;font-family:'Liberation Mono', monospace;font-size:22.77px;line-height:23px;font-weight:700;color:#1e1e1e;transform:scaleX(0.8500);">22.90</div>
<div class="t" style="left:756.43px;top:674.69px;font-family:'Liberation Mono', monospace;font-size:22.77px;line-height:23px;font-weight:700;color:#1e1e1e;transform:scaleX(0.8500);">76.89</div>
<div class="t" style="left:901.23px;top:674.69px;font-family:'Liberation Mono', monospace;font-size:22.77px;line-height:23px;font-weight:700;color:#1e1e1e;transform:scaleX(0.8500);">76.89</div>
<div class="t" style="left:1046.03px;top:674.69px;font-family:'Liberation Mono', monospace;font-size:22.77px;line-height:23px;font-weight:700;color:#1e1e1e;transform:scaleX(0.8500);">76.89</div>
<div class="t" style="left:1190.83px;top:674.69px;font-family:'Liberation Mono', monospace;font-size:22.77px;line-height:23px;font-weight:700;color:#1e1e1e;transform:scaleX(0.8500);">52.04</div>
<div class="t" style="left:1335.63px;top:674.69px;font-family:'Liberation Mono', monospace;font-size:22.77px;line-height:23px;font-weight:700;color:#1e1e1e;transform:scaleX(0.8500);">13.30</div>
<div class="t" style="left:1492.04px;top:674.69px;font-family:'Liberation Mono', monospace;font-size:22.77px;line-height:23px;font-weight:700;color:#1e1e1e;transform:scaleX(0.8500);">1.39</div>
<div class="t" style="left:1636.84px;top:674.69px;font-family:'Liberation Mono', monospace;font-size:22.77px;line-height:23px;font-weight:700;color:#1e1e1e;transform:scaleX(0.8500);">5.57</div>
<div class="t" style="left:78.40px;top:704.84px;font-family:'Liberation Sans', sans-serif;font-size:22.53px;line-height:23px;font-weight:400;color:#333;transform:scaleX(0.9245);">Appliances</div>
<div class="t" style="left:310.42px;top:706.59px;font-family:'Liberation Mono', monospace;font-size:22.77px;line-height:23px;font-weight:400;color:#2e2e2e;transform:scaleX(0.8500);">107.53</div>
<div class="t" style="left:466.83px;top:706.59px;font-family:'Liberation Mono', monospace;font-size:22.77px;line-height:23px;font-weight:400;color:#2e2e2e;transform:scaleX(0.8500);">18.14</div>
<div class="t" style="left:623.24px;top:706.59px;font-family:'Liberation Mono', monospace;font-size:22.77px;line-height:23px;font-weight:400;color:#2e2e2e;transform:scaleX(0.8500);">1.73</div>
<div class="t" style="left:756.43px;top:706.59px;font-family:'Liberation Mono', monospace;font-size:22.77px;line-height:23px;font-weight:400;color:#2e2e2e;transform:scaleX(0.8500);">11.50</div>
<div class="t" style="left:901.23px;top:706.59px;font-family:'Liberation Mono', monospace;font-size:22.77px;line-height:23px;font-weight:400;color:#2e2e2e;transform:scaleX(0.8500);">11.50</div>
<div class="t" style="left:1046.03px;top:706.59px;font-family:'Liberation Mono', monospace;font-size:22.77px;line-height:23px;font-weight:400;color:#2e2e2e;transform:scaleX(0.8500);">11.50</div>
<div class="t" style="left:1190.83px;top:706.59px;font-family:'Liberation Mono', monospace;font-size:22.77px;line-height:23px;font-weight:400;color:#2e2e2e;transform:scaleX(0.8500);">11.67</div>
<div class="t" style="left:1347.24px;top:706.59px;font-family:'Liberation Mono', monospace;font-size:22.77px;line-height:23px;font-weight:400;color:#2e2e2e;transform:scaleX(0.8500);">3.25</div>
<div class="t" style="left:1492.04px;top:706.59px;font-family:'Liberation Mono', monospace;font-size:22.77px;line-height:23px;font-weight:400;color:#2e2e2e;transform:scaleX(0.8500);">0.09</div>
<div class="t" style="left:1636.84px;top:706.59px;font-family:'Liberation Mono', monospace;font-size:22.77px;line-height:23px;font-weight:400;color:#2e2e2e;transform:scaleX(0.8500);">1.25</div>
<div class="t" style="left:78.40px;top:737.34px;font-family:'Liberation Sans', sans-serif;font-size:22.53px;line-height:23px;font-weight:400;color:#333;">Art</div>
<div class="t" style="left:322.03px;top:739.09px;font-family:'Liberation Mono', monospace;font-size:22.77px;line-height:23px;font-weight:400;color:#2e2e2e;transform:scaleX(0.8500);">27.01</div>
<div class="t" style="left:478.44px;top:739.09px;font-family:'Liberation Mono', monospace;font-size:22.77px;line-height:23px;font-weight:400;color:#2e2e2e;transform:scaleX(0.8500);">6.52</div>
<div class="t" style="left:623.24px;top:739.09px;font-family:'Liberation Mono', monospace;font-size:22.77px;line-height:23px;font-weight:400;color:#2e2e2e;transform:scaleX(0.8500);">2.99</div>
<div class="t" style="left:768.04px;top:739.09px;font-family:'Liberation Mono', monospace;font-size:22.77px;line-height:23px;font-weight:400;color:#2e2e2e;transform:scaleX(0.8500);">2.89</div>
<div class="t" style="left:912.84px;top:739.09px;font-family:'Liberation Mono', monospace;font-size:22.77px;line-height:23px;font-weight:400;color:#2e2e2e;transform:scaleX(0.8500);">2.89</div>
<div class="t" style="left:1057.64px;top:739.09px;font-family:'Liberation Mono', monospace;font-size:22.77px;line-height:23px;font-weight:400;color:#2e2e2e;transform:scaleX(0.8500);">2.89</div>
<div class="t" style="left:1202.44px;top:739.09px;font-family:'Liberation Mono', monospace;font-size:22.77px;line-height:23px;font-weight:400;color:#2e2e2e;transform:scaleX(0.8500);">1.86</div>
<div class="t" style="left:1347.24px;top:739.09px;font-family:'Liberation Mono', monospace;font-size:22.77px;line-height:23px;font-weight:400;color:#2e2e2e;transform:scaleX(0.8500);">0.46</div>
<div class="t" style="left:1492.04px;top:739.09px;font-family:'Liberation Mono', monospace;font-size:22.77px;line-height:23px;font-weight:400;color:#2e2e2e;transform:scaleX(0.8500);">0.19</div>
<div class="t" style="left:1636.84px;top:739.09px;font-family:'Liberation Mono', monospace;font-size:22.77px;line-height:23px;font-weight:400;color:#2e2e2e;transform:scaleX(0.8500);">0.20</div>
<div class="t" style="left:78.40px;top:769.84px;font-family:'Liberation Sans', sans-serif;font-size:22.53px;line-height:23px;font-weight:400;color:#333;transform:scaleX(0.9113);">Binders</div>
<div class="t" style="left:310.42px;top:771.59px;font-family:'Liberation Mono', monospace;font-size:22.77px;line-height:23px;font-weight:400;color:#2e2e2e;transform:scaleX(0.8500);">203.41</div>
<div class="t" style="left:466.83px;top:771.59px;font-family:'Liberation Mono', monospace;font-size:22.77px;line-height:23px;font-weight:400;color:#2e2e2e;transform:scaleX(0.8500);">30.22</div>
<div class="t" style="left:623.24px;top:771.59px;font-family:'Liberation Mono', monospace;font-size:22.77px;line-height:23px;font-weight:400;color:#2e2e2e;transform:scaleX(0.8500);">5.97</div>
<div class="t" style="left:756.43px;top:771.59px;font-family:'Liberation Mono', monospace;font-size:22.77px;line-height:23px;font-weight:400;color:#2e2e2e;transform:scaleX(0.8500);">21.76</div>
<div class="t" style="left:901.23px;top:771.59px;font-family:'Liberation Mono', monospace;font-size:22.77px;line-height:23px;font-weight:400;color:#2e2e2e;transform:scaleX(0.8500);">21.76</div>
<div class="t" style="left:1046.03px;top:771.59px;font-family:'Liberation Mono', monospace;font-size:22.77px;line-height:23px;font-weight:400;color:#2e2e2e;transform:scaleX(0.8500);">21.76</div>
<div class="t" style="left:1190.83px;top:771.59px;font-family:'Liberation Mono', monospace;font-size:22.77px;line-height:23px;font-weight:400;color:#2e2e2e;transform:scaleX(0.8500);">14.47</div>
<div class="t" style="left:1347.24px;top:771.59px;font-family:'Liberation Mono', monospace;font-size:22.77px;line-height:23px;font-weight:400;color:#2e2e2e;transform:scaleX(0.8500);">5.50</div>
<div class="t" style="left:1492.04px;top:771.59px;font-family:'Liberation Mono', monospace;font-size:22.77px;line-height:23px;font-weight:400;color:#2e2e2e;transform:scaleX(0.8500);">0.37</div>
<div class="t" style="left:1636.84px;top:771.59px;font-family:'Liberation Mono', monospace;font-size:22.77px;line-height:23px;font-weight:400;color:#2e2e2e;transform:scaleX(0.8500);">1.55</div>
<div class="t" style="left:78.40px;top:802.34px;font-family:'Liberation Sans', sans-serif;font-size:22.53px;line-height:23px;font-weight:400;color:#333;transform:scaleX(0.9039);">Envelopes</div>
<div class="t" style="left:322.03px;top:804.09px;font-family:'Liberation Mono', monospace;font-size:22.77px;line-height:23px;font-weight:400;color:#2e2e2e;transform:scaleX(0.8500);">16.48</div>
<div class="t" style="left:478.44px;top:804.09px;font-family:'Liberation Mono', monospace;font-size:22.77px;line-height:23px;font-weight:400;color:#2e2e2e;transform:scaleX(0.8500);">6.96</div>
<div class="t" style="left:623.24px;top:804.09px;font-family:'Liberation Mono', monospace;font-size:22.77px;line-height:23px;font-weight:400;color:#2e2e2e;transform:scaleX(0.8500);">0.91</div>
<div class="t" style="left:768.04px;top:804.09px;font-family:'Liberation Mono', monospace;font-size:22.77px;line-height:23px;font-weight:400;color:#2e2e2e;transform:scaleX(0.8500);">1.76</div>
<div class="t" style="left:912.84px;top:804.09px;font-family:'Liberation Mono', monospace;font-size:22.77px;line-height:23px;font-weight:400;color:#2e2e2e;transform:scaleX(0.8500);">1.76</div>
<div class="t" style="left:1057.64px;top:804.09px;font-family:'Liberation Mono', monospace;font-size:22.77px;line-height:23px;font-weight:400;color:#2e2e2e;transform:scaleX(0.8500);">1.76</div>
<div class="t" style="left:1202.44px;top:804.09px;font-family:'Liberation Mono', monospace;font-size:22.77px;line-height:23px;font-weight:400;color:#2e2e2e;transform:scaleX(0.8500);">1.17</div>
<div class="t" style="left:1347.24px;top:804.09px;font-family:'Liberation Mono', monospace;font-size:22.77px;line-height:23px;font-weight:400;color:#2e2e2e;transform:scaleX(0.8500);">0.48</div>
<div class="t" style="left:1492.04px;top:804.09px;font-family:'Liberation Mono', monospace;font-size:22.77px;line-height:23px;font-weight:400;color:#2e2e2e;transform:scaleX(0.8500);">0.06</div>
<div class="t" style="left:1636.84px;top:804.09px;font-family:'Liberation Mono', monospace;font-size:22.77px;line-height:23px;font-weight:400;color:#2e2e2e;transform:scaleX(0.8500);">0.12</div>
<div class="t" style="left:78.40px;top:834.84px;font-family:'Liberation Sans', sans-serif;font-size:22.53px;line-height:23px;font-weight:400;color:#333;transform:scaleX(0.8723);">Fasteners</div>
<div class="t" style="left:333.64px;top:836.59px;font-family:'Liberation Mono', monospace;font-size:22.77px;line-height:23px;font-weight:400;color:#2e2e2e;transform:scaleX(0.8500);">3.02</div>
<div class="t" style="left:478.44px;top:836.59px;font-family:'Liberation Mono', monospace;font-size:22.77px;line-height:23px;font-weight:400;color:#2e2e2e;transform:scaleX(0.8500);">0.95</div>
<div class="t" style="left:623.24px;top:836.59px;font-family:'Liberation Mono', monospace;font-size:22.77px;line-height:23px;font-weight:400;color:#2e2e2e;transform:scaleX(0.8500);">0.91</div>
<div class="t" style="left:768.04px;top:836.59px;font-family:'Liberation Mono', monospace;font-size:22.77px;line-height:23px;font-weight:400;color:#2e2e2e;transform:scaleX(0.8500);">0.32</div>
<div class="t" style="left:912.84px;top:836.59px;font-family:'Liberation Mono', monospace;font-size:22.77px;line-height:23px;font-weight:400;color:#2e2e2e;transform:scaleX(0.8500);">0.32</div>
<div class="t" style="left:1057.64px;top:836.59px;font-family:'Liberation Mono', monospace;font-size:22.77px;line-height:23px;font-weight:400;color:#2e2e2e;transform:scaleX(0.8500);">0.32</div>
<div class="t" style="left:1202.44px;top:836.59px;font-family:'Liberation Mono', monospace;font-size:22.77px;line-height:23px;font-weight:400;color:#2e2e2e;transform:scaleX(0.8500);">0.19</div>
<div class="t" style="left:1347.24px;top:836.59px;font-family:'Liberation Mono', monospace;font-size:22.77px;line-height:23px;font-weight:400;color:#2e2e2e;transform:scaleX(0.8500);">0.04</div>
<div class="t" style="left:1492.04px;top:836.59px;font-family:'Liberation Mono', monospace;font-size:22.77px;line-height:23px;font-weight:400;color:#2e2e2e;transform:scaleX(0.8500);">0.06</div>
<div class="t" style="left:1636.84px;top:836.59px;font-family:'Liberation Mono', monospace;font-size:22.77px;line-height:23px;font-weight:400;color:#2e2e2e;transform:scaleX(0.8500);">0.02</div>
<div class="t" style="left:78.40px;top:867.34px;font-family:'Liberation Sans', sans-serif;font-size:22.53px;line-height:23px;font-weight:400;color:#333;transform:scaleX(0.8825);">Labels</div>
<div class="t" style="left:322.03px;top:869.09px;font-family:'Liberation Mono', monospace;font-size:22.77px;line-height:23px;font-weight:400;color:#2e2e2e;transform:scaleX(0.8500);">12.49</div>
<div class="t" style="left:478.44px;top:869.09px;font-family:'Liberation Mono', monospace;font-size:22.77px;line-height:23px;font-weight:400;color:#2e2e2e;transform:scaleX(0.8500);">5.55</div>
<div class="t" style="left:623.24px;top:869.09px;font-family:'Liberation Mono', monospace;font-size:22.77px;line-height:23px;font-weight:400;color:#2e2e2e;transform:scaleX(0.8500);">1.40</div>
<div class="t" style="left:768.04px;top:869.09px;font-family:'Liberation Mono', monospace;font-size:22.77px;line-height:23px;font-weight:400;color:#2e2e2e;transform:scaleX(0.8500);">1.34</div>
<div class="t" style="left:912.84px;top:869.09px;font-family:'Liberation Mono', monospace;font-size:22.77px;line-height:23px;font-weight:400;color:#2e2e2e;transform:scaleX(0.8500);">1.34</div>
<div class="t" style="left:1057.64px;top:869.09px;font-family:'Liberation Mono', monospace;font-size:22.77px;line-height:23px;font-weight:400;color:#2e2e2e;transform:scaleX(0.8500);">1.34</div>
<div class="t" style="left:1202.44px;top:869.09px;font-family:'Liberation Mono', monospace;font-size:22.77px;line-height:23px;font-weight:400;color:#2e2e2e;transform:scaleX(0.8500);">0.42</div>
<div class="t" style="left:1347.24px;top:869.09px;font-family:'Liberation Mono', monospace;font-size:22.77px;line-height:23px;font-weight:400;color:#2e2e2e;transform:scaleX(0.8500);">0.18</div>
<div class="t" style="left:1492.04px;top:869.09px;font-family:'Liberation Mono', monospace;font-size:22.77px;line-height:23px;font-weight:400;color:#2e2e2e;transform:scaleX(0.8500);">0.07</div>
<div class="t" style="left:1636.84px;top:869.09px;font-family:'Liberation Mono', monospace;font-size:22.77px;line-height:23px;font-weight:400;color:#2e2e2e;transform:scaleX(0.8500);">0.05</div>
<div class="t" style="left:78.40px;top:899.84px;font-family:'Liberation Sans', sans-serif;font-size:22.53px;line-height:23px;font-weight:400;color:#333;transform:scaleX(0.8736);">Paper</div>
<div class="t" style="left:322.03px;top:901.59px;font-family:'Liberation Mono', monospace;font-size:22.77px;line-height:23px;font-weight:400;color:#2e2e2e;transform:scaleX(0.8500);">78.48</div>
<div class="t" style="left:466.83px;top:901.59px;font-family:'Liberation Mono', monospace;font-size:22.77px;line-height:23px;font-weight:400;color:#2e2e2e;transform:scaleX(0.8500);">34.05</div>
<div class="t" style="left:623.24px;top:901.59px;font-family:'Liberation Mono', monospace;font-size:22.77px;line-height:23px;font-weight:400;color:#2e2e2e;transform:scaleX(0.8500);">5.18</div>
<div class="t" style="left:768.04px;top:901.59px;font-family:'Liberation Mono', monospace;font-size:22.77px;line-height:23px;font-weight:400;color:#2e2e2e;transform:scaleX(0.8500);">8.39</div>
<div class="t" style="left:912.84px;top:901.59px;font-family:'Liberation Mono', monospace;font-size:22.77px;line-height:23px;font-weight:400;color:#2e2e2e;transform:scaleX(0.8500);">8.39</div>
<div class="t" style="left:1057.64px;top:901.59px;font-family:'Liberation Mono', monospace;font-size:22.77px;line-height:23px;font-weight:400;color:#2e2e2e;transform:scaleX(0.8500);">8.39</div>
<div class="t" style="left:1202.44px;top:901.59px;font-family:'Liberation Mono', monospace;font-size:22.77px;line-height:23px;font-weight:400;color:#2e2e2e;transform:scaleX(0.8500);">3.74</div>
<div class="t" style="left:1347.24px;top:901.59px;font-family:'Liberation Mono', monospace;font-size:22.77px;line-height:23px;font-weight:400;color:#2e2e2e;transform:scaleX(0.8500);">1.68</div>
<div class="t" style="left:1492.04px;top:901.59px;font-family:'Liberation Mono', monospace;font-size:22.77px;line-height:23px;font-weight:400;color:#2e2e2e;transform:scaleX(0.8500);">0.31</div>
<div class="t" style="left:1636.84px;top:901.59px;font-family:'Liberation Mono', monospace;font-size:22.77px;line-height:23px;font-weight:400;color:#2e2e2e;transform:scaleX(0.8500);">0.40</div>
<div class="t" style="left:78.40px;top:932.34px;font-family:'Liberation Sans', sans-serif;font-size:22.53px;line-height:23px;font-weight:400;color:#333;transform:scaleX(0.8820);">Storage</div>
<div class="t" style="left:310.42px;top:934.09px;font-family:'Liberation Mono', monospace;font-size:22.77px;line-height:23px;font-weight:400;color:#2e2e2e;transform:scaleX(0.8500);">223.84</div>
<div class="t" style="left:466.83px;top:934.09px;font-family:'Liberation Mono', monospace;font-size:22.77px;line-height:23px;font-weight:400;color:#2e2e2e;transform:scaleX(0.8500);">21.28</div>
<div class="t" style="left:623.24px;top:934.09px;font-family:'Liberation Mono', monospace;font-size:22.77px;line-height:23px;font-weight:400;color:#2e2e2e;transform:scaleX(0.8500);">3.16</div>
<div class="t" style="left:756.43px;top:934.09px;font-family:'Liberation Mono', monospace;font-size:22.77px;line-height:23px;font-weight:400;color:#2e2e2e;transform:scaleX(0.8500);">23.94</div>
<div class="t" style="left:901.23px;top:934.09px;font-family:'Liberation Mono', monospace;font-size:22.77px;line-height:23px;font-weight:400;color:#2e2e2e;transform:scaleX(0.8500);">23.94</div>
<div class="t" style="left:1046.03px;top:934.09px;font-family:'Liberation Mono', monospace;font-size:22.77px;line-height:23px;font-weight:400;color:#2e2e2e;transform:scaleX(0.8500);">23.94</div>
<div class="t" style="left:1190.83px;top:934.09px;font-family:'Liberation Mono', monospace;font-size:22.77px;line-height:23px;font-weight:400;color:#2e2e2e;transform:scaleX(0.8500);">14.01</div>
<div class="t" style="left:1347.24px;top:934.09px;font-family:'Liberation Mono', monospace;font-size:22.77px;line-height:23px;font-weight:400;color:#2e2e2e;transform:scaleX(0.8500);">1.56</div>
<div class="t" style="left:1492.04px;top:934.09px;font-family:'Liberation Mono', monospace;font-size:22.77px;line-height:23px;font-weight:400;color:#2e2e2e;transform:scaleX(0.8500);">0.19</div>
<div class="t" style="left:1636.84px;top:934.09px;font-family:'Liberation Mono', monospace;font-size:22.77px;line-height:23px;font-weight:400;color:#2e2e2e;transform:scaleX(0.8500);">1.50</div>
<div class="t" style="left:78.40px;top:964.84px;font-family:'Liberation Sans', sans-serif;font-size:22.53px;line-height:23px;font-weight:400;color:#333;transform:scaleX(0.9028);">Supplies</div>
<div class="t" style="left:322.03px;top:966.59px;font-family:'Liberation Mono', monospace;font-size:22.77px;line-height:23px;font-weight:400;color:#2e2e2e;transform:scaleX(0.8500);">46.67</div>
<div class="t" style="left:466.83px;top:966.59px;font-family:'Liberation Mono', monospace;font-size:22.77px;line-height:23px;font-weight:400;color:#2e2e2e;transform:scaleX(0.8500);">-1.19</div>
<div class="t" style="left:623.24px;top:966.59px;font-family:'Liberation Mono', monospace;font-size:22.77px;line-height:23px;font-weight:400;color:#2e2e2e;transform:scaleX(0.8500);">0.65</div>
<div class="t" style="left:768.04px;top:966.59px;font-family:'Liberation Mono', monospace;font-size:22.77px;line-height:23px;font-weight:400;color:#2e2e2e;transform:scaleX(0.8500);">4.99</div>
<div class="t" style="left:912.84px;top:966.59px;font-family:'Liberation Mono', monospace;font-size:22.77px;line-height:23px;font-weight:400;color:#2e2e2e;transform:scaleX(0.8500);">4.99</div>
<div class="t" style="left:1057.64px;top:966.59px;font-family:'Liberation Mono', monospace;font-size:22.77px;line-height:23px;font-weight:400;color:#2e2e2e;transform:scaleX(0.8500);">4.99</div>
<div class="t" style="left:1202.44px;top:966.59px;font-family:'Liberation Mono', monospace;font-size:22.77px;line-height:23px;font-weight:400;color:#2e2e2e;transform:scaleX(0.8500);">4.50</div>
<div class="t" style="left:1347.24px;top:966.59px;font-family:'Liberation Mono', monospace;font-size:22.77px;line-height:23px;font-weight:400;color:#2e2e2e;transform:scaleX(0.8500);">0.15</div>
<div class="t" style="left:1492.04px;top:966.59px;font-family:'Liberation Mono', monospace;font-size:22.77px;line-height:23px;font-weight:400;color:#2e2e2e;transform:scaleX(0.8500);">0.04</div>
<div class="t" style="left:1636.84px;top:966.59px;font-family:'Liberation Mono', monospace;font-size:22.77px;line-height:23px;font-weight:400;color:#2e2e2e;transform:scaleX(0.8500);">0.48</div>
<div class="t" style="left:69.70px;top:999.94px;font-family:'Liberation Sans', sans-serif;font-size:22.53px;line-height:23px;font-weight:400;color:#222;transform:scaleX(0.9325);-webkit-text-stroke:0.95px #222;">Technology</div>
<div class="r" style="left:42.40px;top:1001.75px;width:15.40px;height:15.50px;border:1.6px solid #555;box-sizing:border-box;"></div>
<div class="r" style="left:45.80px;top:1008.85px;width:8.60px;height:1.40px;background:#555;"></div>
<div class="t" style="left:310.42px;top:1001.69px;font-family:'Liberation Mono', monospace;font-size:22.77px;line-height:23px;font-weight:700;color:#1e1e1e;transform:scaleX(0.8500);">836.15</div>
<div class="t" style="left:455.22px;top:1001.69px;font-family:'Liberation Mono', monospace;font-size:22.77px;line-height:23px;font-weight:700;color:#1e1e1e;transform:scaleX(0.8500);">145.45</div>
<div class="t" style="left:623.24px;top:1001.69px;font-family:'Liberation Mono', monospace;font-size:22.77px;line-height:23px;font-weight:700;color:#1e1e1e;transform:scaleX(0.8500);">6.94</div>
<div class="t" style="left:756.43px;top:1001.69px;font-family:'Liberation Mono', monospace;font-size:22.77px;line-height:23px;font-weight:700;color:#1e1e1e;transform:scaleX(0.8500);">89.43</div>
<div class="t" style="left:901.23px;top:1001.69px;font-family:'Liberation Mono', monospace;font-size:22.77px;line-height:23px;font-weight:700;color:#1e1e1e;transform:scaleX(0.8500);">89.43</div>
<div class="t" style="left:1046.03px;top:1001.69px;font-family:'Liberation Mono', monospace;font-size:22.77px;line-height:23px;font-weight:700;color:#1e1e1e;transform:scaleX(0.8500);">89.43</div>
<div class="t" style="left:1190.83px;top:1001.69px;font-family:'Liberation Mono', monospace;font-size:22.77px;line-height:23px;font-weight:700;color:#1e1e1e;transform:scaleX(0.8500);">51.12</div>
<div class="t" style="left:1335.63px;top:1001.69px;font-family:'Liberation Mono', monospace;font-size:22.77px;line-height:23px;font-weight:700;color:#1e1e1e;transform:scaleX(0.8500);">11.34</div>
<div class="t" style="left:1492.04px;top:1001.69px;font-family:'Liberation Mono', monospace;font-size:22.77px;line-height:23px;font-weight:700;color:#1e1e1e;transform:scaleX(0.8500);">0.40</div>
<div class="t" style="left:1636.84px;top:1001.69px;font-family:'Liberation Mono', monospace;font-size:22.77px;line-height:23px;font-weight:700;color:#1e1e1e;transform:scaleX(0.8500);">5.47</div>
<div class="t" style="left:78.40px;top:1032.84px;font-family:'Liberation Sans', sans-serif;font-size:22.53px;line-height:23px;font-weight:400;color:#333;transform:scaleX(0.8779);">Accessories</div>
<div class="t" style="left:310.42px;top:1034.59px;font-family:'Liberation Mono', monospace;font-size:22.77px;line-height:23px;font-weight:400;color:#2e2e2e;transform:scaleX(0.8500);">167.38</div>
<div class="t" style="left:466.83px;top:1034.59px;font-family:'Liberation Mono', monospace;font-size:22.77px;line-height:23px;font-weight:400;color:#2e2e2e;transform:scaleX(0.8500);">41.94</div>
<div class="t" style="left:623.24px;top:1034.59px;font-family:'Liberation Mono', monospace;font-size:22.77px;line-height:23px;font-weight:400;color:#2e2e2e;transform:scaleX(0.8500);">2.98</div>
<div class="t" style="left:756.43px;top:1034.59px;font-family:'Liberation Mono', monospace;font-size:22.77px;line-height:23px;font-weight:400;color:#2e2e2e;transform:scaleX(0.8500);">17.90</div>
<div class="t" style="left:901.23px;top:1034.59px;font-family:'Liberation Mono', monospace;font-size:22.77px;line-height:23px;font-weight:400;color:#2e2e2e;transform:scaleX(0.8500);">17.90</div>
<div class="t" style="left:1046.03px;top:1034.59px;font-family:'Liberation Mono', monospace;font-size:22.77px;line-height:23px;font-weight:400;color:#2e2e2e;transform:scaleX(0.8500);">17.90</div>
<div class="t" style="left:1202.44px;top:1034.59px;font-family:'Liberation Mono', monospace;font-size:22.77px;line-height:23px;font-weight:400;color:#2e2e2e;transform:scaleX(0.8500);">7.54</div>
<div class="t" style="left:1347.24px;top:1034.59px;font-family:'Liberation Mono', monospace;font-size:22.77px;line-height:23px;font-weight:400;color:#2e2e2e;transform:scaleX(0.8500);">2.30</div>
<div class="t" style="left:1492.04px;top:1034.59px;font-family:'Liberation Mono', monospace;font-size:22.77px;line-height:23px;font-weight:400;color:#2e2e2e;transform:scaleX(0.8500);">0.14</div>
<div class="t" style="left:1636.84px;top:1034.59px;font-family:'Liberation Mono', monospace;font-size:22.77px;line-height:23px;font-weight:400;color:#2e2e2e;transform:scaleX(0.8500);">0.81</div>
<div class="t" style="left:78.40px;top:1065.34px;font-family:'Liberation Sans', sans-serif;font-size:22.53px;line-height:23px;font-weight:400;color:#333;transform:scaleX(0.8968);">Copiers</div>
<div class="t" style="left:310.42px;top:1067.09px;font-family:'Liberation Mono', monospace;font-size:22.77px;line-height:23px;font-weight:400;color:#2e2e2e;transform:scaleX(0.8500);">149.53</div>
<div class="t" style="left:466.83px;top:1067.09px;font-family:'Liberation Mono', monospace;font-size:22.77px;line-height:23px;font-weight:400;color:#2e2e2e;transform:scaleX(0.8500);">55.62</div>
<div class="t" style="left:623.24px;top:1067.09px;font-family:'Liberation Mono', monospace;font-size:22.77px;line-height:23px;font-weight:400;color:#2e2e2e;transform:scaleX(0.8500);">0.23</div>
<div class="t" style="left:756.43px;top:1067.09px;font-family:'Liberation Mono', monospace;font-size:22.77px;line-height:23px;font-weight:400;color:#2e2e2e;transform:scaleX(0.8500);">15.99</div>
<div class="t" style="left:901.23px;top:1067.09px;font-family:'Liberation Mono', monospace;font-size:22.77px;line-height:23px;font-weight:400;color:#2e2e2e;transform:scaleX(0.8500);">15.99</div>
<div class="t" style="left:1046.03px;top:1067.09px;font-family:'Liberation Mono', monospace;font-size:22.77px;line-height:23px;font-weight:400;color:#2e2e2e;transform:scaleX(0.8500);">15.99</div>
<div class="t" style="left:1202.44px;top:1067.09px;font-family:'Liberation Mono', monospace;font-size:22.77px;line-height:23px;font-weight:400;color:#2e2e2e;transform:scaleX(0.8500);">6.12</div>
<div class="t" style="left:1347.24px;top:1067.09px;font-family:'Liberation Mono', monospace;font-size:22.77px;line-height:23px;font-weight:400;color:#2e2e2e;transform:scaleX(0.8500);">2.28</div>
<div class="t" style="left:1492.04px;top:1067.09px;font-family:'Liberation Mono', monospace;font-size:22.77px;line-height:23px;font-weight:400;color:#2e2e2e;transform:scaleX(0.8500);">0.01</div>
<div class="t" style="left:1636.84px;top:1067.09px;font-family:'Liberation Mono', monospace;font-size:22.77px;line-height:23px;font-weight:400;color:#2e2e2e;transform:scaleX(0.8500);">0.65</div>
<div class="t" style="left:78.40px;top:1097.84px;font-family:'Liberation Sans', sans-serif;font-size:22.53px;line-height:23px;font-weight:400;color:#333;transform:scaleX(0.9064);">Machines</div>
<div class="t" style="left:310.42px;top:1099.59px;font-family:'Liberation Mono', monospace;font-size:22.77px;line-height:23px;font-weight:400;color:#2e2e2e;transform:scaleX(0.8500);">189.24</div>
<div class="t" style="left:478.44px;top:1099.59px;font-family:'Liberation Mono', monospace;font-size:22.77px;line-height:23px;font-weight:400;color:#2e2e2e;transform:scaleX(0.8500);">3.38</div>
<div class="t" style="left:623.24px;top:1099.59px;font-family:'Liberation Mono', monospace;font-size:22.77px;line-height:23px;font-weight:400;color:#2e2e2e;transform:scaleX(0.8500);">0.44</div>
<div class="t" style="left:756.43px;top:1099.59px;font-family:'Liberation Mono', monospace;font-size:22.77px;line-height:23px;font-weight:400;color:#2e2e2e;transform:scaleX(0.8500);">20.24</div>
<div class="t" style="left:901.23px;top:1099.59px;font-family:'Liberation Mono', monospace;font-size:22.77px;line-height:23px;font-weight:400;color:#2e2e2e;transform:scaleX(0.8500);">20.24</div>
<div class="t" style="left:1046.03px;top:1099.59px;font-family:'Liberation Mono', monospace;font-size:22.77px;line-height:23px;font-weight:400;color:#2e2e2e;transform:scaleX(0.8500);">20.24</div>
<div class="t" style="left:1190.83px;top:1099.59px;font-family:'Liberation Mono', monospace;font-size:22.77px;line-height:23px;font-weight:400;color:#2e2e2e;transform:scaleX(0.8500);">15.12</div>
<div class="t" style="left:1347.24px;top:1099.59px;font-family:'Liberation Mono', monospace;font-size:22.77px;line-height:23px;font-weight:400;color:#2e2e2e;transform:scaleX(0.8500);">3.63</div>
<div class="t" style="left:1492.04px;top:1099.59px;font-family:'Liberation Mono', monospace;font-size:22.77px;line-height:23px;font-weight:400;color:#2e2e2e;transform:scaleX(0.8500);">0.03</div>
<div class="t" style="left:1636.84px;top:1099.59px;font-family:'Liberation Mono', monospace;font-size:22.77px;line-height:23px;font-weight:400;color:#2e2e2e;transform:scaleX(0.8500);">1.62</div>
<div class="t" style="left:78.40px;top:1130.34px;font-family:'Liberation Sans', sans-serif;font-size:22.53px;line-height:23px;font-weight:400;color:#333;transform:scaleX(0.8766);">Phones</div>
<div class="t" style="left:310.42px;top:1132.09px;font-family:'Liberation Mono', monospace;font-size:22.77px;line-height:23px;font-weight:400;color:#2e2e2e;transform:scaleX(0.8500);">330.01</div>
<div class="t" style="left:466.83px;top:1132.09px;font-family:'Liberation Mono', monospace;font-size:22.77px;line-height:23px;font-weight:400;color:#2e2e2e;transform:scaleX(0.8500);">44.52</div>
<div class="t" style="left:623.24px;top:1132.09px;font-family:'Liberation Mono', monospace;font-size:22.77px;line-height:23px;font-weight:400;color:#2e2e2e;transform:scaleX(0.8500);">3.29</div>
<div class="t" style="left:756.43px;top:1132.09px;font-family:'Liberation Mono', monospace;font-size:22.77px;line-height:23px;font-weight:400;color:#2e2e2e;transform:scaleX(0.8500);">35.30</div>
<div class="t" style="left:901.23px;top:1132.09px;font-family:'Liberation Mono', monospace;font-size:22.77px;line-height:23px;font-weight:400;color:#2e2e2e;transform:scaleX(0.8500);">35.30</div>
<div class="t" style="left:1046.03px;top:1132.09px;font-family:'Liberation Mono', monospace;font-size:22.77px;line-height:23px;font-weight:400;color:#2e2e2e;transform:scaleX(0.8500);">35.30</div>
<div class="t" style="left:1190.83px;top:1132.09px;font-family:'Liberation Mono', monospace;font-size:22.77px;line-height:23px;font-weight:400;color:#2e2e2e;transform:scaleX(0.8500);">22.35</div>
<div class="t" style="left:1347.24px;top:1132.09px;font-family:'Liberation Mono', monospace;font-size:22.77px;line-height:23px;font-weight:400;color:#2e2e2e;transform:scaleX(0.8500);">3.13</div>
<div class="t" style="left:1492.04px;top:1132.09px;font-family:'Liberation Mono', monospace;font-size:22.77px;line-height:23px;font-weight:400;color:#2e2e2e;transform:scaleX(0.8500);">0.22</div>
<div class="t" style="left:1636.84px;top:1132.09px;font-family:'Liberation Mono', monospace;font-size:22.77px;line-height:23px;font-weight:400;color:#2e2e2e;transform:scaleX(0.8500);">2.39</div>
<div class="r" style="left:30.00px;top:1221.00px;width:1738.50px;height:15.00px;background:#fbfbfb;border-radius:8px;box-shadow:inset 0 0 0 1px #efefef;"></div>
<div class="r" style="left:30.00px;top:1221.50px;width:262.00px;height:14.00px;background:#a9a9a9;border-radius:7px;"></div>
<div class="r" style="left:4.00px;top:1244.00px;width:1764.50px;height:1.40px;background:#e2e2e2;"></div>
<div class="t" style="left:4.50px;top:1258.44px;font-family:'Liberation Sans', sans-serif;font-size:21.80px;line-height:22px;font-weight:400;color:#333;transform:scaleX(0.9544);">Total Rows: 21</div>
<div class="r" style="left:1222.30px;top:1255.30px;width:98.50px;height:35.20px;background:#fff;border:1.3px solid #b0b0b0;box-sizing:border-box;"></div>
<div class="t" style="left:1245.00px;top:1263.04px;font-family:'Liberation Mono', monospace;font-size:22.77px;line-height:23px;font-weight:400;color:#333;transform:scaleX(0.8600);">100</div>
<div class="t" style="left:1284.50px;top:1261.04px;font-family:'Liberation Sans', sans-serif;font-size:23.26px;line-height:23px;font-weight:400;color:#333;transform:scaleX(0.7247);">%</div>
<div class="t" style="left:1401.50px;top:1256.59px;font-family:'Liberation Sans', sans-serif;font-size:22.53px;line-height:23px;font-weight:400;color:#333;transform:scaleX(0.9093);">21 records</div>
<div class="t" style="left:1572.80px;top:1256.59px;font-family:'Liberation Sans', sans-serif;font-size:22.53px;line-height:23px;font-weight:400;color:#333;transform:scaleX(0.9103);">Page 1 of 1</div>
<div class="r" style="left:1769.00px;top:0.00px;width:535.00px;height:1295.00px;background:#fff;box-shadow:-2px 0 4px rgba(0,0,0,0.09);"></div>
<div class="r" style="left:1769.00px;top:159.60px;width:532.00px;height:1042.40px;background:#f4f4f4;"></div>
<div class="r" style="left:1769.00px;top:158.60px;width:532.00px;height:1.40px;background:#d4d4d4;"></div>
<div class="r" style="left:2288.00px;top:160.50px;width:12.50px;height:946.50px;background:#f9f9f9;border-radius:6px;box-shadow:inset 0 0 0 1px #ececec;"></div>
<div class="t" style="left:1800.10px;top:46.70px;font-family:'Liberation Sans', sans-serif;font-size:36.05px;line-height:36px;font-weight:400;color:#333;transform:scaleX(0.9574);">Comments Settings</div>
<div class="t" style="left:1795.40px;top:124.19px;font-family:'Liberation Sans', sans-serif;font-size:23.98px;line-height:24px;font-weight:400;color:#333;transform:scaleX(0.9330);-webkit-text-stroke:0.9px #333;">General</div>
<div class="t" style="left:1920.60px;top:124.19px;font-family:'Liberation Sans', sans-serif;font-size:23.98px;line-height:24px;font-weight:400;color:#6a6a6a;transform:scaleX(0.9178);-webkit-text-stroke:0.9px #6a6a6a;">Digest</div>
<div class="t" style="left:2028.00px;top:124.19px;font-family:'Liberation Sans', sans-serif;font-size:23.98px;line-height:24px;font-weight:400;color:#6a6a6a;transform:scaleX(0.9036);-webkit-text-stroke:0.9px #6a6a6a;">Permissions</div>
<div class="r" style="left:1795.00px;top:155.00px;width:80.20px;height:4.00px;background:#0a6fd6;"></div>
<div class="r" style="left:1795.00px;top:196.00px;width:28.80px;height:28.80px;background:#0a74d9;"></div>
<div class="r" style="left:1794.80px;top:246.90px;width:29.00px;height:28.70px;border:2px solid #5a5a5a;box-sizing:border-box;"></div>
<div class="r" style="left:1794.80px;top:304.90px;width:29.00px;height:28.60px;border:2px solid #5a5a5a;box-sizing:border-box;"></div>
<div class="r" style="left:1794.80px;top:689.20px;width:29.00px;height:28.70px;background:#0a74d9;"></div>
<div class="t" style="left:1842.60px;top:198.99px;font-family:'Liberation Sans', sans-serif;font-size:22.24px;line-height:22px;font-weight:400;color:#333;transform:scaleX(0.9347);">Enable comments</div>
<div class="t" style="left:1842.50px;top:250.39px;font-family:'Liberation Sans', sans-serif;font-size:22.24px;line-height:22px;font-weight:400;color:#333;transform:scaleX(0.9396);">Show comments panel</div>
<div class="t" style="left:1842.50px;top:307.19px;font-family:'Liberation Sans', sans-serif;font-size:22.24px;line-height:22px;font-weight:400;color:#333;transform:scaleX(0.9439);">Show starred comments on load</div>
<div class="t" style="left:1842.50px;top:692.69px;font-family:'Liberation Sans', sans-serif;font-size:22.24px;line-height:22px;font-weight:400;color:#333;transform:scaleX(0.9437);">Send email for new replies and mentions</div>
<div class="t" style="left:1795.60px;top:380.09px;font-family:'Liberation Sans', sans-serif;font-size:23.98px;line-height:24px;font-weight:400;color:#333;transform:scaleX(0.9583);-webkit-text-stroke:0.9px #333;">Indicator Display</div>
<div class="t" style="left:1795.60px;top:515.29px;font-family:'Liberation Sans', sans-serif;font-size:23.98px;line-height:24px;font-weight:400;color:#333;transform:scaleX(0.9628);-webkit-text-stroke:0.9px #333;">Indicator Position</div>
<div class="t" style="left:2118.50px;top:515.29px;font-family:'Liberation Sans', sans-serif;font-size:23.98px;line-height:24px;font-weight:400;color:#333;transform:scaleX(0.9276);-webkit-text-stroke:0.9px #333;">Preview</div>
<div class="t" style="left:1795.60px;top:648.69px;font-family:'Liberation Sans', sans-serif;font-size:23.98px;line-height:24px;font-weight:400;color:#333;transform:scaleX(1.0172);-webkit-text-stroke:0.9px #333;">Notification</div>
<div class="r" style="left:1794.80px;top:411.20px;width:314.40px;height:56.80px;background:#fff;border:1px solid #dadada;box-sizing:border-box;"></div>
<div class="r" style="left:2118.10px;top:410.10px;width:144.10px;height:56.40px;background:#fff;border:1px solid #dadada;box-sizing:border-box;"></div>
<div class="r" style="left:1795.20px;top:545.30px;width:315.10px;height:56.50px;background:#fff;border:1px solid #dadada;box-sizing:border-box;"></div>
<div class="r" style="left:2118.10px;top:542.70px;width:144.10px;height:59.10px;background:#fff;border:1px solid #e2e2e2;box-sizing:border-box;"></div>
<div class="r" style="left:2122.90px;top:547.50px;width:134.50px;height:48.80px;background:#fff;border:1px solid #cfcfcf;box-sizing:border-box;"></div>
<div class="t" style="left:1862.00px;top:428.29px;font-family:'Liberation Sans', sans-serif;font-size:22.24px;line-height:22px;font-weight:400;color:#333;transform:scaleX(0.9781);">Priority</div>
<div class="t" style="left:2131.10px;top:427.89px;font-family:'Liberation Sans', sans-serif;font-size:22.24px;line-height:22px;font-weight:400;color:#333;transform:scaleX(0.9191);">14px</div>
<div class="t" style="left:1807.80px;top:562.89px;font-family:'Liberation Sans', sans-serif;font-size:22.24px;line-height:22px;font-weight:400;color:#333;transform:scaleX(0.9600);">Left</div>
<div class="r" style="left:1781.70px;top:739.00px;width:491.60px;height:146.30px;border:2px solid #e0262b;box-sizing:border-box;border-radius:5px;box-shadow:inset 0 0 6px rgba(0,0,0,0.12);"></div>
<div class="t" style="left:1795.30px;top:750.29px;font-family:'Liberation Sans', sans-serif;font-size:23.98px;line-height:24px;font-weight:400;color:#333;transform:scaleX(0.9458);-webkit-text-stroke:0.9px #333;">Report name</div>
<div class="t" style="left:1934.30px;top:749.45px;font-family:'Liberation Sans', sans-serif;font-size:18.90px;line-height:19px;font-weight:700;color:#e0262b;transform:scaleX(1.2213);">*</div>
<div class="r" style="left:1794.80px;top:794.30px;width:467.60px;height:57.10px;background:#fff;border:1px solid #dadada;box-sizing:border-box;"></div>
<div class="t" style="left:1818.50px;top:811.29px;font-family:'Liberation Sans', sans-serif;font-size:22.24px;line-height:22px;font-weight:400;color:#333;transform:scaleX(0.9281);">Sales report</div>
<div class="t" style="left:1795.30px;top:855.75px;font-family:'Liberation Sans', sans-serif;font-size:18.02px;line-height:18px;font-weight:400;color:#666;transform:scaleX(0.9809);">Used as a report name in email notification</div>
<div class="r" style="left:1794.80px;top:893.00px;width:467.60px;height:1.30px;background:#dcdcdc;"></div>
<div class="r" style="left:1794.80px;top:970.40px;width:467.60px;height:1.30px;background:#dcdcdc;"></div>
<div class="t" style="left:1826.40px;top:921.59px;font-family:'Liberation Sans', sans-serif;font-size:22.24px;line-height:22px;font-weight:400;color:#1a72c4;transform:scaleX(0.9579);">Delete all comments</div>
<div class="t" style="left:1799.00px;top:1236.29px;font-family:'Liberation Sans', sans-serif;font-size:22.24px;line-height:22px;font-weight:400;color:#1a72c4;transform:scaleX(0.9271);">Reset all settings</div>
<div class="r" style="left:2138.30px;top:1220.00px;width:144.70px;height:53.90px;background:#0078d4;"></div>
<div class="t" style="left:2187.90px;top:1236.64px;font-family:'Liberation Sans', sans-serif;font-size:23.26px;line-height:23px;font-weight:700;color:#fff;transform:scaleX(0.8379);">Save</div>
<svg style="position:absolute;left:0;top:0;pointer-events:none" width="2304" height="1295"><rect x="27.2" y="87.2" width="5.5000000000000036" height="5.099999999999994" fill="#79b1ee" stroke="#1f56a8" stroke-width="2"/><line x1="36.6" y1="90.3" x2="58.1" y2="90.3" stroke="#333" stroke-width="1.8"/><rect x="34.7" y="99.7" width="5.0" height="4.599999999999994" fill="none" stroke="#333" stroke-width="1.8"/><line x1="44.2" y1="101.9" x2="58" y2="101.9" stroke="#333" stroke-width="1.8"/><rect x="34.7" y="111.8" width="5.0" height="5.200000000000003" fill="none" stroke="#333" stroke-width="1.8"/><line x1="44.2" y1="113.8" x2="58" y2="113.8" stroke="#333" stroke-width="1.8"/><polyline points="137.8,98.5 144.10000000000002,104.8 150.4,98.5" fill="none" stroke="#333" stroke-width="2.2" stroke-linecap="butt" stroke-linejoin="miter"/><path d="M40.2,177.6 L28.3,166.3 L47.8,169.5 Z" fill="#79b1ee" stroke="#1f56a8" stroke-width="1.8" /><path d="M28,166 L40.5,154 Q42.3,152.4 44,154 L46,156.2 L53.2,149.6 Q55.5,147.8 57.1,149.6 Q58.6,151.6 56.6,153.6 L49.8,160.4 Q52.8,163.2 51.5,165.6 L40.2,177.6" fill="none" stroke="#333" stroke-width="1.8" /><line x1="40.6" y1="157" x2="49.3" y2="165.2" stroke="#1f56a8" stroke-width="1.8"/><polyline points="143.4,160.5 149.5,166.8 155.6,160.5" fill="none" stroke="#333" stroke-width="2.2" stroke-linecap="butt" stroke-linejoin="miter"/><line x1="189" y1="80.8" x2="221.8" y2="80.8" stroke="#c4c4c4" stroke-width="1.8"/><line x1="189" y1="90.9" x2="210.8" y2="90.9" stroke="#c4c4c4" stroke-width="1.8"/><line x1="189" y1="100.7" x2="221.8" y2="100.7" stroke="#c4c4c4" stroke-width="1.8"/><line x1="189" y1="110.5" x2="210.8" y2="110.5" stroke="#c4c4c4" stroke-width="1.8"/><polyline points="227.5,92.5 234.0,99.5 240.5,92.5" fill="none" stroke="#c4c4c4" stroke-width="2" stroke-linecap="butt" stroke-linejoin="miter"/><line x1="189" y1="150" x2="221.8" y2="150" stroke="#c4c4c4" stroke-width="1.8"/><line x1="194.8" y1="157.5" x2="215.9" y2="157.5" stroke="#c4c4c4" stroke-width="1.8"/><line x1="189" y1="165" x2="221.8" y2="165" stroke="#c4c4c4" stroke-width="1.8"/><polyline points="227.5,153.8 234.0,160.8 240.5,153.8" fill="none" stroke="#c4c4c4" stroke-width="2" stroke-linecap="butt" stroke-linejoin="miter"/><text x="284" y="103" font-family="'Liberation Sans'" font-size="27" font-weight="400" fill="#333" text-anchor="middle" stroke="#333" stroke-width="0.7">ab</text><line x1="271" y1="109.4" x2="295.5" y2="109.4" stroke="#1f56a8" stroke-width="1.8"/><path d="M291.5,105.8 L296.5,109.4 L291.5,113" fill="none" stroke="#1f56a8" stroke-width="1.8" /><polyline points="309.4,95 315.7,101.8 322,95" fill="none" stroke="#333" stroke-width="2.2" stroke-linecap="butt" stroke-linejoin="miter"/><text x="350.4" y="99" font-family="'Liberation Sans'" font-size="21.5" font-weight="400" fill="#333" text-anchor="middle" stroke="#333" stroke-width="0.6">ab</text><text x="343" y="113.4" font-family="'Liberation Sans'" font-size="19" font-weight="400" fill="#333" text-anchor="middle" stroke="#333" stroke-width="0.7">c</text><path d="M361.5,101.5 L361.5,110 L349.5,110" fill="none" stroke="#1f56a8" stroke-width="1.8" /><path d="M353,106.5 L349.3,110 L353,113.5" fill="none" stroke="#1f56a8" stroke-width="1.8" /><line x1="406.5" y1="86" x2="406.5" y2="111" stroke="#333" stroke-width="2.2"/><path d="M401.5,90.5 L406.5,83.5 L411.5,90.5 Z" fill="#333" stroke="#333" stroke-width="1" /><path d="M401.5,106.5 L406.5,113.8 L411.5,106.5 Z" fill="#333" stroke="#333" stroke-width="1" /><polyline points="474,94.5 481.1,88 488.2,94.5" fill="none" stroke="#333" stroke-width="1.6"/><polyline points="474,105.8 481.1,112.2 488.2,105.8" fill="none" stroke="#333" stroke-width="1.6" stroke-linecap="butt" stroke-linejoin="miter"/><line x1="267.3" y1="142.6" x2="297.8" y2="142.6" stroke="#9a9a9a" stroke-width="1.8"/><line x1="283.8" y1="152.6" x2="297.8" y2="152.6" stroke="#9a9a9a" stroke-width="1.8"/><line x1="283.8" y1="162.3" x2="297.8" y2="162.3" stroke="#9a9a9a" stroke-width="1.8"/><line x1="267.3" y1="172.1" x2="297.8" y2="172.1" stroke="#9a9a9a" stroke-width="1.8"/><line x1="268" y1="157.4" x2="283" y2="157.4" stroke="#7aa0d4" stroke-width="1.8"/><path d="M274.5,151.5 L268,157.4 L274.5,163.5" fill="none" stroke="#7aa0d4" stroke-width="1.8" /><line x1="337.2" y1="142.6" x2="367.9" y2="142.6" stroke="#9a9a9a" stroke-width="1.8"/><line x1="337.2" y1="152.6" x2="351.3" y2="152.6" stroke="#9a9a9a" stroke-width="1.8"/><line x1="337.2" y1="162.3" x2="351.3" y2="162.3" stroke="#9a9a9a" stroke-width="1.8"/><line x1="337.2" y1="172.1" x2="367.9" y2="172.1" stroke="#9a9a9a" stroke-width="1.8"/><line x1="352" y1="157.4" x2="367.3" y2="157.4" stroke="#7aa0d4" stroke-width="1.8"/><path d="M360.8,151.5 L367.3,157.4 L360.8,163.5" fill="none" stroke="#7aa0d4" stroke-width="1.8" /><path d="M443.2,161 L443.2,143.6 L471.4,143.6 L471.4,161" fill="none" stroke="#333" stroke-width="2" /><line x1="443" y1="167.9" x2="471.8" y2="167.9" stroke="#1f56a8" stroke-width="2"/><path d="M447.8,162.8 L442.6,167.9 L447.8,173" fill="none" stroke="#1f56a8" stroke-width="2" /><path d="M466.8,162.8 L472,167.9 L466.8,173" fill="none" stroke="#1f56a8" stroke-width="2" /><polyline points="481,153.4 487.2,160.8 493.4,153.4" fill="none" stroke="#333" stroke-width="2.3" stroke-linecap="butt" stroke-linejoin="miter"/><polyline points="665,97.2 671.2,104.2 677.4,97.2" fill="none" stroke="#333" stroke-width="2.2" stroke-linecap="butt" stroke-linejoin="miter"/><line x1="625" y1="148.2" x2="638" y2="148.2" stroke="#1f56a8" stroke-width="2.6"/><line x1="631.5" y1="141.8" x2="631.5" y2="154.6" stroke="#1f56a8" stroke-width="2.6"/><line x1="668.5" y1="148.2" x2="680.2" y2="148.2" stroke="#1f56a8" stroke-width="2.6"/><line x1="719" y1="80.2" x2="719" y2="112.3" stroke="#c8c8c8" stroke-width="1.6"/><rect x="719.5" y="83.2" width="14.100000000000023" height="10.599999999999994" fill="#d4e4f6" stroke="#bdd0e8" stroke-width="1.5"/><rect x="719.5" y="97.7" width="28.700000000000045" height="10.599999999999994" fill="#d4e4f6" stroke="#bdd0e8" stroke-width="1.5"/><polyline points="757.8,92.6 764.0999999999999,99.6 770.4,92.6" fill="none" stroke="#9a9a9a" stroke-width="2" stroke-linecap="butt" stroke-linejoin="miter"/><line x1="782" y1="81" x2="782" y2="111" stroke="#c8c8c8" stroke-width="1.6"/><line x1="782" y1="86.8" x2="799.6" y2="86.8" stroke="#c8c8c8" stroke-width="1.6"/><line x1="782" y1="104.7" x2="790.3" y2="104.7" stroke="#c8c8c8" stroke-width="1.6"/><rect x="800.1" y="80.9" width="12.699999999999932" height="12.299999999999997" fill="#d4e4f6" stroke="#bdd0e8" stroke-width="1.5"/><rect x="790.8" y="98.9" width="13.300000000000068" height="12.299999999999997" fill="#d4e4f6" stroke="#bdd0e8" stroke-width="1.5"/><polyline points="820.3,92.6 826.8499999999999,99.6 833.4,92.6" fill="none" stroke="#c8c8c8" stroke-width="2" stroke-linecap="butt" stroke-linejoin="miter"/><rect x="857" y="81" width="30.200000000000045" height="6.599999999999994" fill="none" stroke="#c8c8c8" stroke-width="1.5"/><line x1="857" y1="81" x2="857" y2="111.7" stroke="#c8c8c8" stroke-width="1.5"/><rect x="874.8" y="92.5" width="12.400000000000091" height="7.099999999999994" fill="none" stroke="#c8c8c8" stroke-width="1.5"/><rect x="857" y="104.1" width="16.299999999999955" height="7.1000000000000085" fill="#d4e4f6" stroke="#bdd0e8" stroke-width="1.5"/><polyline points="895,92.6 901.25,99.6 907.5,92.6" fill="none" stroke="#c8c8c8" stroke-width="2" stroke-linecap="butt" stroke-linejoin="miter"/><rect x="718" y="145.8" width="31.299999999999955" height="21.599999999999994" fill="none" stroke="#c8c8c8" stroke-width="1.5"/><rect x="718.5" y="150.5" width="27.0" height="10.5" fill="#d4e4f6" stroke="#bdd0e8" stroke-width="1.5"/><line x1="737.6" y1="145.8" x2="737.6" y2="167.4" stroke="#c8c8c8" stroke-width="1.5"/><rect x="718.5" y="150.5" width="27.0" height="10.5" fill="#d4e4f6" stroke="#bdd0e8" stroke-width="1.5"/><polyline points="757.8,152.6 764.0999999999999,159.6 770.4,152.6" fill="none" stroke="#9a9a9a" stroke-width="2" stroke-linecap="butt" stroke-linejoin="miter"/><path d="M786.6,167.9 L794.5,153.5 L802.6,159.8 L810.3,144.7" fill="none" stroke="#c8c8c8" stroke-width="1.5" /><circle cx="786.6" cy="167.9" r="3.8" fill="#d4e4f6" stroke="#bdd0e8" stroke-width="1.4"/><circle cx="810.3" cy="144.7" r="3.8" fill="#d4e4f6" stroke="#bdd0e8" stroke-width="1.4"/><polyline points="822.6,152.6 829.1500000000001,159.6 835.7,152.6" fill="none" stroke="#9a9a9a" stroke-width="2" stroke-linecap="butt" stroke-linejoin="miter"/><rect x="986.6" y="83.2" width="15.399999999999977" height="9.299999999999997" fill="#6fa8e8" stroke="#1f56a8" stroke-width="1.6"/><rect x="986.6" y="103" width="15.399999999999977" height="10.400000000000006" fill="#6fa8e8" stroke="#1f56a8" stroke-width="1.6"/><rect x="986.2" y="93" width="8.5" height="9.599999999999994" fill="#f08c8c" stroke="#d33" stroke-width="1.2"/><rect x="979" y="83.2" width="30" height="30.200000000000003" fill="none" stroke="#333" stroke-width="1.8"/><line x1="979" y1="92.5" x2="1009" y2="92.5" stroke="#333" stroke-width="1.6"/><line x1="979" y1="103" x2="1009" y2="103" stroke="#333" stroke-width="1.6"/><line x1="986.2" y1="83.2" x2="986.2" y2="113.4" stroke="#333" stroke-width="1.6"/><line x1="1002.2" y1="83.2" x2="1002.2" y2="113.4" stroke="#333" stroke-width="1.6"/><rect x="986.6" y="83.8" width="15.399999999999977" height="8.700000000000003" fill="#6fa8e8" stroke="#1f56a8" stroke-width="1.6"/><rect x="986.6" y="103" width="15.399999999999977" height="9.799999999999997" fill="#6fa8e8" stroke="#1f56a8" stroke-width="1.6"/><polyline points="1042.4,162.2 1048.8000000000002,169.6 1055.2,162.2" fill="none" stroke="#333" stroke-width="2.2" stroke-linecap="butt" stroke-linejoin="miter"/><path d="M1110,88 L1110,83.2 L1079,83.2 L1095.5,98.3 L1079,113.4 L1110,113.4 L1110,108.5" fill="none" stroke="#333" stroke-width="2" /><polyline points="1089.8,162.2 1096.1999999999998,169.6 1102.6,162.2" fill="none" stroke="#333" stroke-width="2.2" stroke-linecap="butt" stroke-linejoin="miter"/><path d="M1145.2,112.6 L1145.2,106 L1153,106 L1153,100 L1161,100 L1161,94.5 L1173.8,94.5 L1173.8,112.6 Z" fill="none" stroke="#333" stroke-width="1.8" /><path d="M1163.8,83 L1174.4,83 L1169.1,89.2 Z" fill="#4a8ee0" stroke="#1f56a8" stroke-width="1.2" /><rect x="1232.5" y="82.7" width="12.799999999999955" height="12.799999999999997" fill="#6fa8e8" stroke="#1f56a8" stroke-width="1.8"/><line x1="1238.9" y1="95.5" x2="1238.9" y2="108.5" stroke="#333" stroke-width="1.8"/><path d="M1226.2,108.5 L1226.2,101.3 L1251.7,101.3 L1251.7,108.5" fill="none" stroke="#333" stroke-width="1.8" /><rect x="1223.5" y="108.6" width="5.599999999999909" height="5.400000000000006" fill="#6fa8e8" stroke="#1f56a8" stroke-width="1.5"/><rect x="1236.1" y="108.6" width="5.599999999999909" height="5.400000000000006" fill="#6fa8e8" stroke="#1f56a8" stroke-width="1.5"/><rect x="1248.9" y="108.6" width="5.599999999999909" height="5.400000000000006" fill="#6fa8e8" stroke="#1f56a8" stroke-width="1.5"/><line x1="1229" y1="111.3" x2="1236.1" y2="111.3" stroke="#1f56a8" stroke-width="1.5"/><line x1="1241.7" y1="111.3" x2="1248.9" y2="111.3" stroke="#1f56a8" stroke-width="1.5"/><line x1="1308.2" y1="86.5" x2="1308.2" y2="110.5" stroke="#333" stroke-width="1.8"/><path d="M1304.6,90 L1308.2,85.8 L1311.8,90" fill="none" stroke="#333" stroke-width="1.8" /><line x1="1318.8" y1="85.5" x2="1318.8" y2="111" stroke="#1f56a8" stroke-width="1.8"/><path d="M1315.2,107.2 L1318.8,111.4 L1322.4,107.2" fill="none" stroke="#1f56a8" stroke-width="1.8" /><circle cx="1374.2" cy="96.6" r="9.6" fill="#fff" stroke="#1f56a8" stroke-width="2"/><line x1="1367" y1="104" x2="1353.6" y2="117.3" stroke="#333" stroke-width="1.8"/><path d="M1355,150 L1383,150 L1372.2,164.5 L1372.2,175.2 L1366.8,177.2 L1366.8,164.5 Z" fill="none" stroke="#333" stroke-width="1.8" stroke-linejoin="round"/><polyline points="1399,155.6 1405.2,162 1411.4,155.6" fill="none" stroke="#333" stroke-width="2.2" stroke-linecap="butt" stroke-linejoin="miter"/><path d="M1476,84.8 L1490.4,84.8 L1490.4,102.5 L1482.6,110.2 L1466.6,110.2 L1466.6,92" fill="none" stroke="#9a9a9a" stroke-width="1.7" /><path d="M1482.6,110.2 L1482.6,102.5 L1490.4,102.5" fill="none" stroke="#9a9a9a" stroke-width="1.7" /><line x1="1464.5" y1="90.5" x2="1480.2" y2="90.5" stroke="#7aa0d4" stroke-width="1.8"/><line x1="1472.3" y1="82.7" x2="1472.3" y2="98.3" stroke="#7aa0d4" stroke-width="1.8"/><polyline points="1472,159.8 1478.2,167.2 1484.4,159.8" fill="none" stroke="#333" stroke-width="2.2" stroke-linecap="butt" stroke-linejoin="miter"/><circle cx="1565.5" cy="103.5" r="0.75" fill="#8fb0dc" stroke="none" stroke-width="0"/><circle cx="1569.5" cy="103.5" r="0.75" fill="#8fb0dc" stroke="none" stroke-width="0"/><circle cx="1573.5" cy="103.5" r="0.75" fill="#8fb0dc" stroke="none" stroke-width="0"/><circle cx="1577" cy="103.5" r="0.75" fill="#8fb0dc" stroke="none" stroke-width="0"/><circle cx="1565.5" cy="107.5" r="0.75" fill="#8fb0dc" stroke="none" stroke-width="0"/><circle cx="1569.5" cy="107.5" r="0.75" fill="#8fb0dc" stroke="none" stroke-width="0"/><circle cx="1573.5" cy="107.5" r="0.75" fill="#8fb0dc" stroke="none" stroke-width="0"/><circle cx="1577" cy="107.5" r="0.75" fill="#8fb0dc" stroke="none" stroke-width="0"/><circle cx="1565.5" cy="111.5" r="0.75" fill="#8fb0dc" stroke="none" stroke-width="0"/><circle cx="1569.5" cy="111.5" r="0.75" fill="#8fb0dc" stroke="none" stroke-width="0"/><circle cx="1573.5" cy="111.5" r="0.75" fill="#8fb0dc" stroke="none" stroke-width="0"/><circle cx="1577" cy="111.5" r="0.75" fill="#8fb0dc" stroke="none" stroke-width="0"/><path d="M1560.5,99 L1560.5,115 L1580,115 L1580,99.5" fill="none" stroke="#333" stroke-width="1.6" /><rect x="1550.5" y="86.6" width="20.5" height="21.400000000000006" fill="none" stroke="#1f56a8" stroke-width="1.8"/><rect x="1550.5" y="86.6" width="20.5" height="6.400000000000006" fill="#6fa8e8" stroke="#1f56a8" stroke-width="1.8"/><path d="M1707,114 L1725,114 A10.3,10.3 0 0 0 1725,93.4 L1707,93.4" fill="none" stroke="#333" stroke-width="2" /><path d="M1712.5,87.5 L1706.5,93.4 L1712.5,99.3" fill="none" stroke="#333" stroke-width="2" /><path d="M1736,171 L1718,171 A10.3,10.3 0 0 1 1718,150.4 L1736,150.4" fill="none" stroke="#9a9a9a" stroke-width="2" /><path d="M1730.5,144.5 L1736.5,150.4 L1730.5,156.3" fill="none" stroke="#9a9a9a" stroke-width="2" /><path d="M1575.50,154.97 L1579.33,155.28 L1579.33,159.72 L1575.50,160.03 L1574.30,162.93 L1576.79,165.85 L1573.65,168.99 L1570.73,166.50 L1567.83,167.70 L1567.52,171.53 L1563.08,171.53 L1562.77,167.70 L1559.87,166.50 L1556.95,168.99 L1553.81,165.85 L1556.30,162.93 L1555.10,160.03 L1551.27,159.72 L1551.27,155.28 L1555.10,154.97 L1556.30,152.07 L1553.81,149.15 L1556.95,146.01 L1559.87,148.50 L1562.77,147.30 L1563.08,143.47 L1567.52,143.47 L1567.83,147.30 L1570.73,148.50 L1573.65,146.01 L1576.79,149.15 L1574.30,152.07 Z" fill="none" stroke="#333" stroke-width="1.6" stroke-linejoin="round"/><circle cx="1565.3" cy="157.5" r="5.9639999999999995" fill="none" stroke="#1f56a8" stroke-width="2"/><polyline points="1672.6,155 1678.9,161.8 1685.2,155" fill="none" stroke="#333" stroke-width="2.2" stroke-linecap="butt" stroke-linejoin="miter"/><path d="M1750.2,134.5 L1761,144.3 L1750.2,154.2" fill="none" stroke="#333" stroke-width="1.6" /><path d="M910.8,54.7 L901.4,54.7 L901.4,23.7 L932.1,23.7 L932.1,31.3 M916.8,23.7 L916.8,39.7" fill="none" stroke="#333" stroke-width="2" /><path d="M915.8,50.2 L927.4,38.4 A3.7,3.7 0 0 1 932.6,43.6 L920.8,55.2 L915.8,55.2 Z" fill="#e3f1ff" stroke="#1f56a8" stroke-width="2.4" stroke-linejoin="round"/><line x1="924.4" y1="41.4" x2="929.6" y2="46.6" stroke="#1f56a8" stroke-width="2.2"/><polyline points="935.8,35.9 942.2,42.2 948.6,35.9" fill="none" stroke="#333" stroke-width="2.2" stroke-linecap="butt" stroke-linejoin="miter"/><path d="M1234.3,37.2 L1234.3,44.3 L1238.7,44.3 L1242.7,51.6 L1246.8,44.3 L1265,44.3 L1265,23.9 L1254.2,23.9" fill="none" stroke="#9a9a9a" stroke-width="1.7" /><line x1="1235.7" y1="28.9" x2="1251.8" y2="28.9" stroke="#7a9ccc" stroke-width="1.7"/><line x1="1243.8" y1="21" x2="1243.8" y2="36.8" stroke="#7a9ccc" stroke-width="1.7"/><polyline points="1294,34.5 1301.0,41.8 1308,34.5" fill="none" stroke="#333" stroke-width="2.4" stroke-linecap="butt" stroke-linejoin="miter"/><clipPath id="avc"><circle cx="1401.5" cy="40.3" r="21.5"/></clipPath><defs><filter id="avb" x="-10%" y="-10%" width="120%" height="120%"><feGaussianBlur stdDeviation="1.1"/></filter></defs><g clip-path="url(#avc)"><g filter="url(#avb)"><rect x="1378" y="17" width="48" height="48" fill="#b9bfa6"/><rect x="1411" y="28" width="16" height="22" fill="#98c46c"/><rect x="1378" y="35" width="14" height="8" fill="#d98a58"/><rect x="1378" y="43" width="12" height="8" fill="#c9b9b4"/><path d="M1391,46 Q1390,24 1402,20.5 Q1414,22 1413.5,40 L1413,46 Z" fill="#2b211c"/><ellipse cx="1401.8" cy="36" rx="8.3" ry="10.2" fill="#b88872"/><path d="M1384,66 Q1386,47 1396,45 L1408,45 Q1419,47 1422,66 Z" fill="#dde2f2"/><path d="M1396,45 L1402,56 L1408,45 Z" fill="#b88872"/><ellipse cx="1420" cy="46" rx="4" ry="7" fill="#3a2a22"/></g></g><polyline points="1437,36.4 1444.0,44.2 1451,36.4" fill="none" stroke="#333" stroke-width="2.4" stroke-linecap="butt" stroke-linejoin="miter"/><ellipse cx="550.2" cy="516.2" rx="14.2" ry="12.5" fill="#f5474b"/><text x="550.2" y="521.2" font-family="'Liberation Sans'" font-size="15.5" font-weight="400" fill="#fff" text-anchor="middle" stroke="#fff" stroke-width="0.3">@</text><ellipse cx="1274" cy="516.2" rx="14.2" ry="12.5" fill="#f5474b"/><text x="1274" y="521.2" font-family="'Liberation Sans'" font-size="15.5" font-weight="400" fill="#fff" text-anchor="middle" stroke="#fff" stroke-width="0.3">@</text><ellipse cx="548.5" cy="549.8" rx="12.8" ry="12.8" fill="#22c07a"/><text x="548.5" y="555.5999999999999" font-family="'Liberation Sans'" font-size="16" font-weight="400" fill="#fff" text-anchor="middle" stroke="#fff" stroke-width="0.5">4</text><ellipse cx="1271.8" cy="647" rx="12.8" ry="12.8" fill="#f5474b"/><text x="1271.8" y="652.8" font-family="'Liberation Sans'" font-size="16" font-weight="400" fill="#fff" text-anchor="middle" stroke="#fff" stroke-width="0.5">1</text><ellipse cx="261.2" cy="681.6" rx="14.2" ry="12.5" fill="#f5474b"/><text x="261.2" y="686.6" font-family="'Liberation Sans'" font-size="15.5" font-weight="400" fill="#fff" text-anchor="middle" stroke="#fff" stroke-width="0.3">@</text><ellipse cx="550.2" cy="681.6" rx="14.2" ry="12.5" fill="#f5474b"/><text x="550.2" y="686.6" font-family="'Liberation Sans'" font-size="15.5" font-weight="400" fill="#fff" text-anchor="middle" stroke="#fff" stroke-width="0.3">@</text><ellipse cx="695" cy="681.6" rx="14.2" ry="12.5" fill="#f5474b"/><text x="695" y="686.6" font-family="'Liberation Sans'" font-size="15.5" font-weight="400" fill="#fff" text-anchor="middle" stroke="#fff" stroke-width="0.3">@</text><ellipse cx="1274" cy="681.6" rx="14.2" ry="12.5" fill="#f5474b"/><text x="1274" y="686.6" font-family="'Liberation Sans'" font-size="15.5" font-weight="400" fill="#fff" text-anchor="middle" stroke="#fff" stroke-width="0.3">@</text><ellipse cx="1563.8" cy="681.6" rx="14.2" ry="12.5" fill="#f5474b"/><text x="1563.8" y="686.6" font-family="'Liberation Sans'" font-size="15.5" font-weight="400" fill="#fff" text-anchor="middle" stroke="#fff" stroke-width="0.3">@</text><ellipse cx="693.5" cy="812.5" rx="12.8" ry="12.8" fill="#6b4fcf"/><text x="693.5" y="818.3" font-family="'Liberation Sans'" font-size="16" font-weight="400" fill="#fff" text-anchor="middle" stroke="#fff" stroke-width="0.5">6</text><ellipse cx="1271.8" cy="812.5" rx="12.8" ry="12.8" fill="#9b9b9b"/><text x="1271.8" y="818.3" font-family="'Liberation Sans'" font-size="16" font-weight="400" fill="#fff" text-anchor="middle" stroke="#fff" stroke-width="0.5">7</text><ellipse cx="259.2" cy="910.5" rx="12.8" ry="12.8" fill="#f5a043"/><text x="259.2" y="916.3" font-family="'Liberation Sans'" font-size="16" font-weight="400" fill="#fff" text-anchor="middle" stroke="#fff" stroke-width="0.5">2</text><ellipse cx="1561.5" cy="910.5" rx="12.8" ry="12.8" fill="#22c07a"/><text x="1561.5" y="916.3" font-family="'Liberation Sans'" font-size="16" font-weight="400" fill="#fff" text-anchor="middle" stroke="#fff" stroke-width="0.5">4</text><ellipse cx="548.5" cy="975.3" rx="12.8" ry="12.8" fill="#e9c20d"/><text x="548.5" y="981.0999999999999" font-family="'Liberation Sans'" font-size="16" font-weight="400" fill="#fff" text-anchor="middle" stroke="#fff" stroke-width="0.5">3</text><ellipse cx="695" cy="1008" rx="14.2" ry="12.5" fill="#f5474b"/><text x="695" y="1013" font-family="'Liberation Sans'" font-size="15.5" font-weight="400" fill="#fff" text-anchor="middle" stroke="#fff" stroke-width="0.3">@</text><ellipse cx="693.5" cy="1106.2" rx="12.8" ry="12.8" fill="#5b85f5"/><text x="693.5" y="1112.0" font-family="'Liberation Sans'" font-size="16" font-weight="400" fill="#fff" text-anchor="middle" stroke="#fff" stroke-width="0.5">5</text><path d="M1163.96,1266.71 L1167.73,1267.01 L1167.73,1271.39 L1163.96,1271.69 L1162.77,1274.55 L1165.23,1277.43 L1162.13,1280.53 L1159.25,1278.07 L1156.39,1279.26 L1156.09,1283.03 L1151.71,1283.03 L1151.41,1279.26 L1148.55,1278.07 L1145.67,1280.53 L1142.57,1277.43 L1145.03,1274.55 L1143.84,1271.69 L1140.07,1271.39 L1140.07,1267.01 L1143.84,1266.71 L1145.03,1263.85 L1142.57,1260.97 L1145.67,1257.87 L1148.55,1260.33 L1151.41,1259.14 L1151.71,1255.37 L1156.09,1255.37 L1156.39,1259.14 L1159.25,1260.33 L1162.13,1257.87 L1165.23,1260.97 L1162.77,1263.85 Z" fill="none" stroke="#333" stroke-width="1.6" stroke-linejoin="round"/><circle cx="1153.9" cy="1269.2" r="5.88" fill="none" stroke="#1f56a8" stroke-width="2"/><line x1="1188.8" y1="1270.8" x2="1205.9" y2="1270.8" stroke="#333" stroke-width="2"/><line x1="1331.7" y1="1271.4" x2="1350.5" y2="1271.4" stroke="#333" stroke-width="2"/><line x1="1341.1" y1="1261.9" x2="1341.1" y2="1281" stroke="#333" stroke-width="2"/><line x1="1522.3" y1="1260.3" x2="1522.3" y2="1277.6" stroke="#a6a6a6" stroke-width="3.2"/><path d="M1539,1260.3 L1529.5,1269 L1539,1277.6" fill="none" stroke="#a6a6a6" stroke-width="3.2" /><path d="M1561.5,1260.3 L1552,1269 L1561.5,1277.6" fill="none" stroke="#a6a6a6" stroke-width="3.2" /><path d="M1690,1260.3 L1699.5,1269 L1690,1277.6" fill="none" stroke="#a6a6a6" stroke-width="3.2" /><path d="M1712,1260.3 L1721.5,1269 L1712,1277.6" fill="none" stroke="#a6a6a6" stroke-width="3.2" /><line x1="1729.2" y1="1260.3" x2="1729.2" y2="1277.6" stroke="#a6a6a6" stroke-width="3.2"/><line x1="2262" y1="60.7" x2="2283" y2="81.5" stroke="#333" stroke-width="2"/><line x1="2283" y1="60.7" x2="2262" y2="81.5" stroke="#333" stroke-width="2"/><path d="M1800.5,210.5 L1806.5,216.5 L1818.5,204.5" fill="none" stroke="#fff" stroke-width="3.2" /><path d="M1800.5,703.7 L1806.5,709.7 L1818.5,697.7" fill="none" stroke="#fff" stroke-width="3.2" /><circle cx="1832" cy="439.4" r="14.1" fill="#0a6fd6" stroke="none" stroke-width="0"/><text x="1832" y="447.3" font-family="'Liberation Sans'" font-size="21" font-weight="400" fill="#fff" text-anchor="middle">1</text><polyline points="2059.5,440 2069.25,450 2079,440" fill="none" stroke="#444" stroke-width="1.6" stroke-linecap="butt" stroke-linejoin="miter"/><polyline points="2208,432.3 2217.8,443.3 2227.6,432.3" fill="none" stroke="#444" stroke-width="1.6" stroke-linecap="butt" stroke-linejoin="miter"/><polyline points="2056,567.5 2066.25,577.5 2076.5,567.5" fill="none" stroke="#444" stroke-width="1.6" stroke-linecap="butt" stroke-linejoin="miter"/><circle cx="2135.3" cy="563.4" r="12.4" fill="#f0383c" stroke="none" stroke-width="0"/><text x="2135.3" y="569.6" font-family="'Liberation Sans'" font-size="16.5" font-weight="400" fill="#fff" text-anchor="middle">1</text><path d="M1799.5,924.5 L1799.5,939 L1812.5,939 L1812.5,924.5" fill="none" stroke="#1a72c4" stroke-width="1.6" /><line x1="1797.5" y1="922.8" x2="1814.5" y2="922.8" stroke="#1a72c4" stroke-width="1.6"/><path d="M1802.5,922.8 L1802.5,919.3 L1809.5,919.3 L1809.5,922.8" fill="none" stroke="#1a72c4" stroke-width="1.5" /><line x1="1803.3" y1="926" x2="1803.3" y2="937" stroke="#1a72c4" stroke-width="1.1"/><line x1="1806" y1="926" x2="1806" y2="937" stroke="#1a72c4" stroke-width="1.1"/><line x1="1808.7" y1="926" x2="1808.7" y2="937" stroke="#1a72c4" stroke-width="1.1"/></svg>
</body></html>
